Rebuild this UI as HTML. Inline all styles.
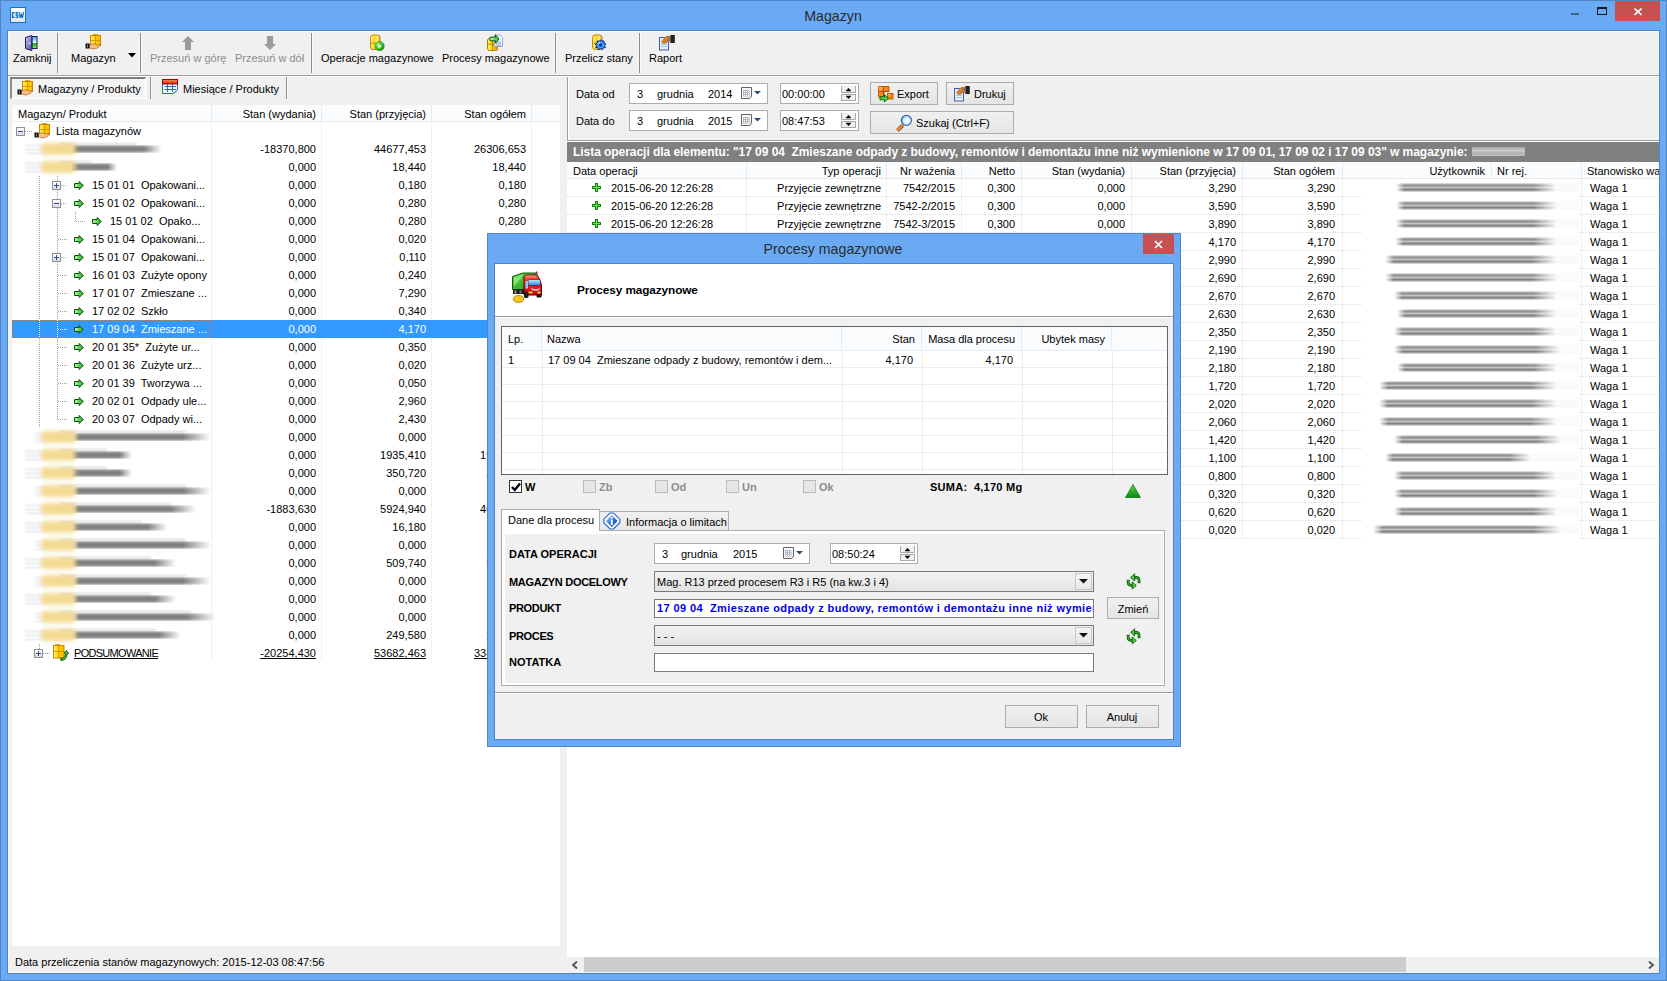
<!DOCTYPE html><html><head><meta charset="utf-8"><style>
html,body{margin:0;padding:0;}
body{width:1667px;height:981px;overflow:hidden;position:relative;background:#6aaaf4;font-family:"Liberation Sans", sans-serif;font-size:11px;color:#000;}
div,svg{position:absolute;box-sizing:border-box;}
.t{white-space:pre;}

</style></head><body>
<div style="left:0px;top:0px;width:1667px;height:981px;border:1px solid #4d86c6;background:#6aaaf4;"></div>
<svg style="left:10px;top:7px;" width="16" height="16" viewBox="0 0 16 16"><defs><linearGradient id="cswg" x1="0" y1="0" x2="0" y2="1"><stop offset="0" stop-color="#ffffff"/><stop offset="1" stop-color="#e4e4e4"/></linearGradient></defs><rect x="0.5" y="0.5" width="15" height="15" fill="url(#cswg)" stroke="#0a78d0"/><path d="M4.6 5.6 H2.6 V10.4 H4.6" stroke="#0a6ec8" stroke-width="1.4" fill="none"/><path d="M8.2 5.6 H6.2 V8 H7.6 V10.4 H5.6" stroke="#0a6ec8" stroke-width="1.3" fill="none"/><path d="M9.3 5 L10.2 11 L11.3 7.5 L12.4 11 L13.6 5" stroke="#0a6ec8" stroke-width="1.2" fill="none"/></svg>
<div class="t" style="left:533px;width:600px;text-align:center;top:8px;font-size:14.2px;line-height:16px;color:#2a2a2a;">Magazyn</div>
<div style="left:1571px;top:13px;width:8px;height:2px;background:#3d5f8a;"></div>
<div style="left:1597px;top:7px;width:10px;height:8px;border:1px solid #1a1a1a;border-top-width:2px;"></div>
<div style="left:1615px;top:1px;width:45px;height:20px;background:#c75050;"></div>
<svg style="left:1634px;top:8px;" width="8" height="8" viewBox="0 0 8 8"><path d="M0.5 0.5 L7.5 7 M7.5 0.5 L0.5 7" stroke="#fff" stroke-width="1.6"/></svg>
<div style="left:7px;top:30px;width:1653px;height:944px;border:1px solid #4d86c6;background:#f0f0f0;"></div>
<div style="left:8px;top:31px;width:1651px;height:1px;background:#f8f8f8;"></div>
<div style="left:8px;top:31px;width:1px;height:942px;background:#faf7f2;"></div>
<div style="left:8px;top:972px;width:1651px;height:1px;background:#faf7f2;"></div>
<div style="left:1658px;top:31px;width:1px;height:942px;background:#faf7f2;"></div>
<div style="left:8px;top:75px;width:1651px;height:1px;background:#a0a0a0;"></div>
<div style="left:8px;top:76px;width:1651px;height:1px;background:#ffffff;"></div>
<div style="left:56px;top:33px;width:1px;height:40px;background:#f6f6f6;"></div>
<div style="left:57px;top:33px;width:1px;height:40px;background:#8c8c8c;"></div>
<div style="left:58px;top:33px;width:1px;height:40px;background:#fafafa;"></div>
<div style="left:139px;top:33px;width:1px;height:40px;background:#f6f6f6;"></div>
<div style="left:140px;top:33px;width:1px;height:40px;background:#8c8c8c;"></div>
<div style="left:141px;top:33px;width:1px;height:40px;background:#fafafa;"></div>
<div style="left:310px;top:33px;width:1px;height:40px;background:#f6f6f6;"></div>
<div style="left:311px;top:33px;width:1px;height:40px;background:#8c8c8c;"></div>
<div style="left:312px;top:33px;width:1px;height:40px;background:#fafafa;"></div>
<div style="left:554px;top:33px;width:1px;height:40px;background:#f6f6f6;"></div>
<div style="left:555px;top:33px;width:1px;height:40px;background:#8c8c8c;"></div>
<div style="left:556px;top:33px;width:1px;height:40px;background:#fafafa;"></div>
<div style="left:638px;top:33px;width:1px;height:40px;background:#f6f6f6;"></div>
<div style="left:639px;top:33px;width:1px;height:40px;background:#8c8c8c;"></div>
<div style="left:640px;top:33px;width:1px;height:40px;background:#fafafa;"></div>
<svg style="left:24px;top:34px;" width="16" height="18" viewBox="0 0 16 18"><defs><linearGradient id="dg" x1="0" y1="0" x2="1" y2="1"><stop offset="0" stop-color="#c8c8ff"/><stop offset="1" stop-color="#50509a"/></linearGradient>
<linearGradient id="skg" x1="0" y1="0" x2="0" y2="1"><stop offset="0" stop-color="#38a8f8"/><stop offset="0.5" stop-color="#e8fcff"/><stop offset="0.52" stop-color="#18a018"/><stop offset="1" stop-color="#70ff50"/></linearGradient></defs>
<rect x="8" y="2.5" width="5" height="12" fill="url(#skg)" stroke="#1c1c5a"/>
<path d="M1.5 3.5 L7.8 1.5 L7.8 16.5 L1.5 14.5 Z" fill="url(#dg)" stroke="#1c1c5a"/>
<rect x="5" y="8.5" width="1.2" height="1.8" fill="#fff"/></svg>
<div class="t" style="left:13px;top:52px;font-size:11px;line-height:13px;">Zamknij</div>
<svg style="left:85px;top:34px;" width="17" height="16" viewBox="0 0 17 16"><defs><linearGradient id="bxg" x1="0" y1="0" x2="1" y2="0"><stop offset="0" stop-color="#fff27a"/><stop offset="0.5" stop-color="#ffd000"/><stop offset="1" stop-color="#ffb800"/></linearGradient></defs>
<rect x="8" y="0" width="5" height="2" fill="#e0a800"/>
<rect x="5.5" y="1.5" width="10" height="10" fill="url(#bxg)" stroke="#c88a00"/>
<path d="M5.5 6.5 H15.5 M10.5 1.5 V11.5" stroke="#c88a00" stroke-width="0.8"/>
<path d="M4.5 10.5 Q9 9 12 11 L15.5 10.5 L14 13 Q11 15 8 15 L4.5 14 Z" fill="#f8c080" stroke="#a05020" stroke-width="0.6"/>
<rect x="0.5" y="9.5" width="4" height="5" fill="#111"/>
<rect x="2" y="10.5" width="1" height="3" fill="#888"/></svg>
<div class="t" style="left:71px;top:52px;font-size:11px;line-height:13px;">Magazyn</div>
<svg style="left:128px;top:53px;" width="8" height="5" viewBox="0 0 8 5"><path d="M0 0 L8 0 L4 4.5 Z" fill="#000"/></svg>
<svg style="left:182px;top:36px;" width="12" height="14" viewBox="0 0 12 14"><path d="M6 0 L12 6 L9 6 L9 14 L3 14 L3 6 L0 6 Z" fill="#9b9b9b"/></svg>
<div class="t" style="left:150px;top:52px;font-size:11px;line-height:13px;color:#8d8d8d;">Przesuń w górę</div>
<svg style="left:264px;top:36px;" width="12" height="14" viewBox="0 0 12 14"><path d="M6 14 L12 8 L9 8 L9 0 L3 0 L3 8 L0 8 Z" fill="#9b9b9b"/></svg>
<div class="t" style="left:235px;top:52px;font-size:11px;line-height:13px;color:#8d8d8d;">Przesuń w dół</div>
<svg style="left:369px;top:34px;" width="16" height="17" viewBox="0 0 16 17"><defs><linearGradient id="cyg" x1="0" y1="0" x2="1" y2="0"><stop offset="0" stop-color="#fff68a"/><stop offset="0.4" stop-color="#ffd21a"/><stop offset="0.75" stop-color="#ffe890"/><stop offset="1" stop-color="#d89a00"/></linearGradient>
<radialGradient id="grg" cx="0.3" cy="0.3" r="0.8"><stop offset="0" stop-color="#90f070"/><stop offset="1" stop-color="#089008"/></radialGradient></defs>
<rect x="1.5" y="1" width="9.5" height="14.5" rx="2.5" fill="url(#cyg)" stroke="#c08a00"/>
<path d="M1.5 9.2 H8" stroke="#c08a00" stroke-width="0.9"/>
<circle cx="10.6" cy="12.2" r="4.6" fill="url(#grg)" stroke="#08a008" stroke-width="0.6"/>
<path d="M9.3 9.8 L12.8 12.2 L9.3 14.6 Z" fill="#fff"/></svg>
<div class="t" style="left:321px;top:52px;font-size:11px;line-height:13px;">Operacje magazynowe</div>
<svg style="left:486px;top:34px;" width="17" height="17" viewBox="0 0 17 17"><defs><linearGradient id="pyg" x1="0" y1="0" x2="1" y2="0"><stop offset="0" stop-color="#ffff50"/><stop offset="0.6" stop-color="#ffc800"/><stop offset="1" stop-color="#e0a000"/></linearGradient>
<linearGradient id="pag" x1="0" y1="0" x2="1" y2="0"><stop offset="0" stop-color="#c0ffc0"/><stop offset="1" stop-color="#20b020"/></linearGradient></defs>
<rect x="1.5" y="4.5" width="10" height="12" rx="2" fill="url(#pyg)" stroke="#b07a00"/>
<path d="M6.5 4.5 V16.5 M1.5 10.2 H11.5" stroke="#b07a00" stroke-width="0.9"/>
<path d="M8.5 1 H14 L16.5 3.5 V12.5 H8.5 Z" fill="#eef8ff" stroke="#9aa4d0"/>
<path d="M10 8 H15 M10 10 H15 M10 12 H15" stroke="#7080c0" stroke-width="0.8"/>
<path d="M4 3.2 H9.5 V0.8 L13 5 L9.5 9.2 V6.8 H4 Z" fill="url(#pag)" stroke="#0a600a"/></svg>
<div class="t" style="left:442px;top:52px;font-size:11px;line-height:13px;">Procesy magazynowe</div>
<svg style="left:591px;top:34px;" width="17" height="17" viewBox="0 0 17 17"><rect x="1.5" y="1" width="9.5" height="14.5" rx="2.5" fill="url(#cyg)" stroke="#c08a00"/>
<path d="M1.5 9.2 H6" stroke="#c08a00" stroke-width="0.9"/>
<path d="M9.6 5.8 L10.8 7.3 L12.9 6.9 L12.9 8.9 L15 10.1 L13.6 11.6 L14.4 13.6 L12.3 13.8 L11.4 15.7 L9.6 14.6 L7.8 15.7 L6.9 13.8 L4.8 13.6 L5.6 11.6 L4.2 10.1 L6.3 8.9 L6.3 6.9 L8.4 7.3 Z" fill="#3aa0f8" stroke="#001a90" stroke-width="1"/>
<circle cx="9.6" cy="11" r="1.6" fill="#0a2a80"/>
<path d="M6.5 10 Q7.5 8 9 8.5" stroke="#e0f8ff" stroke-width="1" fill="none"/></svg>
<div class="t" style="left:565px;top:52px;font-size:11px;line-height:13px;">Przelicz stany</div>
<svg style="left:658px;top:34px;" width="18" height="17" viewBox="0 0 18 17"><rect x="1.5" y="3.5" width="9" height="12.5" fill="#e0f2ff" stroke="#4a5aa8"/>
<path d="M3 10.5 H9 M3 12.5 H9" stroke="#9cc8f0"/>
<path d="M3 7.5 L7 3 L10 1.5 L12.5 3 L12 6 L8 9.5 L5 10 Z" fill="#c8782a"/>
<path d="M4 7.5 L8 4 M5 8.5 L9 5" stroke="#f8d080" stroke-width="0.6" stroke-dasharray="1 1"/>
<rect x="12.3" y="1" width="4.5" height="8" fill="#222"/>
<rect x="11" y="2.5" width="1.5" height="5" fill="#777"/></svg>
<div class="t" style="left:649px;top:52px;font-size:11px;line-height:13px;">Raport</div>
<div style="left:10px;top:77px;width:136px;height:22px;background:#f4f4f4;border-top:2px solid #7d7d7d;border-left:2px solid #8d8d8d;border-right:1px solid #fff;border-bottom:1px solid #fff;"></div>
<svg style="left:17px;top:80px;" width="17" height="16" viewBox="0 0 17 16"><defs><linearGradient id="bxg" x1="0" y1="0" x2="1" y2="0"><stop offset="0" stop-color="#fff27a"/><stop offset="0.5" stop-color="#ffd000"/><stop offset="1" stop-color="#ffb800"/></linearGradient></defs>
<rect x="8" y="0" width="5" height="2" fill="#e0a800"/>
<rect x="5.5" y="1.5" width="10" height="10" fill="url(#bxg)" stroke="#c88a00"/>
<path d="M5.5 6.5 H15.5 M10.5 1.5 V11.5" stroke="#c88a00" stroke-width="0.8"/>
<path d="M4.5 10.5 Q9 9 12 11 L15.5 10.5 L14 13 Q11 15 8 15 L4.5 14 Z" fill="#f8c080" stroke="#a05020" stroke-width="0.6"/>
<rect x="0.5" y="9.5" width="4" height="5" fill="#111"/>
<rect x="2" y="10.5" width="1" height="3" fill="#888"/></svg>
<div class="t" style="left:38px;top:83px;font-size:11px;line-height:13px;">Magazyny / Produkty</div>
<div style="left:150px;top:77px;width:1px;height:22px;background:#8c8c8c;"></div>
<div style="left:151px;top:77px;width:1px;height:22px;background:#fafafa;"></div>
<svg style="left:162px;top:79px;" width="16" height="16" viewBox="0 0 16 16"><defs><linearGradient id="rdg" x1="0" y1="0" x2="0" y2="1"><stop offset="0" stop-color="#ff9060"/><stop offset="1" stop-color="#e02000"/></linearGradient></defs>
<path d="M0.5 4.5 H15.5 V11 L11 14.5 H0.5 Z" fill="#f4fbff" stroke="#2a6ad0"/>
<rect x="0.5" y="0.5" width="15" height="4.5" fill="url(#rdg)" stroke="#a00000"/>
<path d="M2.5 7.5 H14 M2.5 10.5 H14 M5.5 5 V13 M10.5 5 V13" stroke="#2a6ad0"/>
<path d="M10.5 14.5 L15.5 10.5 L13 14 Z" fill="#3a8ae8"/></svg>
<div class="t" style="left:183px;top:83px;font-size:11px;line-height:13px;">Miesiące / Produkty</div>
<div style="left:286px;top:77px;width:1px;height:22px;background:#8c8c8c;"></div>
<div style="left:287px;top:77px;width:1px;height:22px;background:#fafafa;"></div>
<div style="left:12px;top:105px;width:548px;height:841px;background:#fff;"></div>
<div style="left:12px;top:105px;width:548px;height:16px;background:#fbfcfd;"></div>
<div style="left:12px;top:121px;width:548px;height:1px;background:#e3ebf6;"></div>
<div style="left:211px;top:105px;width:1px;height:16px;background:#e3ebf6;"></div>
<div style="left:321px;top:105px;width:1px;height:16px;background:#e3ebf6;"></div>
<div style="left:431px;top:105px;width:1px;height:16px;background:#e3ebf6;"></div>
<div style="left:531px;top:105px;width:1px;height:16px;background:#e3ebf6;"></div>
<div class="t" style="left:18px;top:108px;font-size:11px;line-height:13px;">Magazyn/ Produkt</div>
<div class="t" style="left:-84px;width:400px;text-align:right;top:108px;font-size:11px;line-height:13px;">Stan (wydania)</div>
<div class="t" style="left:26px;width:400px;text-align:right;top:108px;font-size:11px;line-height:13px;">Stan (przyjęcia)</div>
<div class="t" style="left:126px;width:400px;text-align:right;top:108px;font-size:11px;line-height:13px;">Stan ogółem</div>
<div style="left:211px;top:122px;width:1px;height:540px;background:repeating-linear-gradient(to bottom,#e2e2e2 0 1px,transparent 1px 2px);"></div>
<div style="left:321px;top:122px;width:1px;height:540px;background:repeating-linear-gradient(to bottom,#e2e2e2 0 1px,transparent 1px 2px);"></div>
<div style="left:431px;top:122px;width:1px;height:540px;background:repeating-linear-gradient(to bottom,#e2e2e2 0 1px,transparent 1px 2px);"></div>
<div style="left:531px;top:122px;width:1px;height:540px;background:repeating-linear-gradient(to bottom,#e2e2e2 0 1px,transparent 1px 2px);"></div>
<div style="left:12px;top:320px;width:548px;height:18px;background:#3399ff;"></div>
<div style="left:12px;top:320px;width:199px;height:18px;border:1px dotted #e07010;"></div>
<div style="left:39px;top:176px;width:1px;height:252px;background:repeating-linear-gradient(to bottom,#a0a0a0 0 1px,transparent 1px 2px);"></div>
<div style="left:57px;top:176px;width:1px;height:244px;background:repeating-linear-gradient(to bottom,#a0a0a0 0 1px,transparent 1px 2px);"></div>
<div style="left:75px;top:212px;width:1px;height:10px;background:repeating-linear-gradient(to bottom,#a0a0a0 0 1px,transparent 1px 2px);"></div>
<div style="left:61px;top:185px;width:6px;height:1px;background:repeating-linear-gradient(to right,#a0a0a0 0 1px,transparent 1px 2px);"></div>
<svg style="left:52px;top:181px" width="9" height="9" viewBox="0 0 9 9"><defs><linearGradient id="gb" x1="0" y1="0" x2="0" y2="1"><stop offset="0" stop-color="#fff"/><stop offset="1" stop-color="#d8d8d8"/></linearGradient></defs><rect x="0.5" y="0.5" width="8" height="8" fill="url(#gb)" stroke="#919191"/><path d="M2 4.5 H7" stroke="#2a4a9a"/><path d="M4.5 2 V7" stroke="#2a4a9a"/></svg>
<svg style="left:74px;top:181px;" width="10" height="9" viewBox="0 0 10 9"><defs><linearGradient id="gag" x1="0" y1="0" x2="1" y2="0"><stop offset="0" stop-color="#b8ffb0"/><stop offset="1" stop-color="#18a818"/></linearGradient></defs><path d="M0.5 2.5 H5.2 V0.5 L9.2 4.5 L5.2 8.5 V6.5 H0.5 Z" fill="url(#gag)" stroke="#064a06" stroke-width="1"/></svg>
<div class="t" style="left:92px;top:179px;font-size:11px;line-height:13px;">15 01 01  Opakowani...</div>
<div class="t" style="left:-84px;width:400px;text-align:right;top:179px;font-size:11px;line-height:13px;">0,000</div>
<div class="t" style="left:26px;width:400px;text-align:right;top:179px;font-size:11px;line-height:13px;">0,180</div>
<div class="t" style="left:126px;width:400px;text-align:right;top:179px;font-size:11px;line-height:13px;">0,180</div>
<div style="left:61px;top:203px;width:6px;height:1px;background:repeating-linear-gradient(to right,#a0a0a0 0 1px,transparent 1px 2px);"></div>
<svg style="left:52px;top:199px" width="9" height="9" viewBox="0 0 9 9"><defs><linearGradient id="gb" x1="0" y1="0" x2="0" y2="1"><stop offset="0" stop-color="#fff"/><stop offset="1" stop-color="#d8d8d8"/></linearGradient></defs><rect x="0.5" y="0.5" width="8" height="8" fill="url(#gb)" stroke="#919191"/><path d="M2 4.5 H7" stroke="#2a4a9a"/></svg>
<svg style="left:74px;top:199px;" width="10" height="9" viewBox="0 0 10 9"><defs><linearGradient id="gag" x1="0" y1="0" x2="1" y2="0"><stop offset="0" stop-color="#b8ffb0"/><stop offset="1" stop-color="#18a818"/></linearGradient></defs><path d="M0.5 2.5 H5.2 V0.5 L9.2 4.5 L5.2 8.5 V6.5 H0.5 Z" fill="url(#gag)" stroke="#064a06" stroke-width="1"/></svg>
<div class="t" style="left:92px;top:197px;font-size:11px;line-height:13px;">15 01 02  Opakowani...</div>
<div class="t" style="left:-84px;width:400px;text-align:right;top:197px;font-size:11px;line-height:13px;">0,000</div>
<div class="t" style="left:26px;width:400px;text-align:right;top:197px;font-size:11px;line-height:13px;">0,280</div>
<div class="t" style="left:126px;width:400px;text-align:right;top:197px;font-size:11px;line-height:13px;">0,280</div>
<div style="left:58px;top:239px;width:9px;height:1px;background:repeating-linear-gradient(to right,#a0a0a0 0 1px,transparent 1px 2px);"></div>
<svg style="left:74px;top:235px;" width="10" height="9" viewBox="0 0 10 9"><defs><linearGradient id="gag" x1="0" y1="0" x2="1" y2="0"><stop offset="0" stop-color="#b8ffb0"/><stop offset="1" stop-color="#18a818"/></linearGradient></defs><path d="M0.5 2.5 H5.2 V0.5 L9.2 4.5 L5.2 8.5 V6.5 H0.5 Z" fill="url(#gag)" stroke="#064a06" stroke-width="1"/></svg>
<div class="t" style="left:92px;top:233px;font-size:11px;line-height:13px;">15 01 04  Opakowani...</div>
<div class="t" style="left:-84px;width:400px;text-align:right;top:233px;font-size:11px;line-height:13px;">0,000</div>
<div class="t" style="left:26px;width:400px;text-align:right;top:233px;font-size:11px;line-height:13px;">0,020</div>
<div class="t" style="left:126px;width:400px;text-align:right;top:233px;font-size:11px;line-height:13px;">0,020</div>
<div style="left:61px;top:257px;width:6px;height:1px;background:repeating-linear-gradient(to right,#a0a0a0 0 1px,transparent 1px 2px);"></div>
<svg style="left:52px;top:253px" width="9" height="9" viewBox="0 0 9 9"><defs><linearGradient id="gb" x1="0" y1="0" x2="0" y2="1"><stop offset="0" stop-color="#fff"/><stop offset="1" stop-color="#d8d8d8"/></linearGradient></defs><rect x="0.5" y="0.5" width="8" height="8" fill="url(#gb)" stroke="#919191"/><path d="M2 4.5 H7" stroke="#2a4a9a"/><path d="M4.5 2 V7" stroke="#2a4a9a"/></svg>
<svg style="left:74px;top:253px;" width="10" height="9" viewBox="0 0 10 9"><defs><linearGradient id="gag" x1="0" y1="0" x2="1" y2="0"><stop offset="0" stop-color="#b8ffb0"/><stop offset="1" stop-color="#18a818"/></linearGradient></defs><path d="M0.5 2.5 H5.2 V0.5 L9.2 4.5 L5.2 8.5 V6.5 H0.5 Z" fill="url(#gag)" stroke="#064a06" stroke-width="1"/></svg>
<div class="t" style="left:92px;top:251px;font-size:11px;line-height:13px;">15 01 07  Opakowani...</div>
<div class="t" style="left:-84px;width:400px;text-align:right;top:251px;font-size:11px;line-height:13px;">0,000</div>
<div class="t" style="left:26px;width:400px;text-align:right;top:251px;font-size:11px;line-height:13px;">0,110</div>
<div class="t" style="left:126px;width:400px;text-align:right;top:251px;font-size:11px;line-height:13px;">0,110</div>
<div style="left:58px;top:275px;width:9px;height:1px;background:repeating-linear-gradient(to right,#a0a0a0 0 1px,transparent 1px 2px);"></div>
<svg style="left:74px;top:271px;" width="10" height="9" viewBox="0 0 10 9"><defs><linearGradient id="gag" x1="0" y1="0" x2="1" y2="0"><stop offset="0" stop-color="#b8ffb0"/><stop offset="1" stop-color="#18a818"/></linearGradient></defs><path d="M0.5 2.5 H5.2 V0.5 L9.2 4.5 L5.2 8.5 V6.5 H0.5 Z" fill="url(#gag)" stroke="#064a06" stroke-width="1"/></svg>
<div class="t" style="left:92px;top:269px;font-size:11px;line-height:13px;">16 01 03  Zużyte opony</div>
<div class="t" style="left:-84px;width:400px;text-align:right;top:269px;font-size:11px;line-height:13px;">0,000</div>
<div class="t" style="left:26px;width:400px;text-align:right;top:269px;font-size:11px;line-height:13px;">0,240</div>
<div class="t" style="left:126px;width:400px;text-align:right;top:269px;font-size:11px;line-height:13px;">0,240</div>
<div style="left:58px;top:293px;width:9px;height:1px;background:repeating-linear-gradient(to right,#a0a0a0 0 1px,transparent 1px 2px);"></div>
<svg style="left:74px;top:289px;" width="10" height="9" viewBox="0 0 10 9"><defs><linearGradient id="gag" x1="0" y1="0" x2="1" y2="0"><stop offset="0" stop-color="#b8ffb0"/><stop offset="1" stop-color="#18a818"/></linearGradient></defs><path d="M0.5 2.5 H5.2 V0.5 L9.2 4.5 L5.2 8.5 V6.5 H0.5 Z" fill="url(#gag)" stroke="#064a06" stroke-width="1"/></svg>
<div class="t" style="left:92px;top:287px;font-size:11px;line-height:13px;">17 01 07  Zmieszane ...</div>
<div class="t" style="left:-84px;width:400px;text-align:right;top:287px;font-size:11px;line-height:13px;">0,000</div>
<div class="t" style="left:26px;width:400px;text-align:right;top:287px;font-size:11px;line-height:13px;">7,290</div>
<div class="t" style="left:126px;width:400px;text-align:right;top:287px;font-size:11px;line-height:13px;">7,290</div>
<div style="left:58px;top:311px;width:9px;height:1px;background:repeating-linear-gradient(to right,#a0a0a0 0 1px,transparent 1px 2px);"></div>
<svg style="left:74px;top:307px;" width="10" height="9" viewBox="0 0 10 9"><defs><linearGradient id="gag" x1="0" y1="0" x2="1" y2="0"><stop offset="0" stop-color="#b8ffb0"/><stop offset="1" stop-color="#18a818"/></linearGradient></defs><path d="M0.5 2.5 H5.2 V0.5 L9.2 4.5 L5.2 8.5 V6.5 H0.5 Z" fill="url(#gag)" stroke="#064a06" stroke-width="1"/></svg>
<div class="t" style="left:92px;top:305px;font-size:11px;line-height:13px;">17 02 02  Szkło</div>
<div class="t" style="left:-84px;width:400px;text-align:right;top:305px;font-size:11px;line-height:13px;">0,000</div>
<div class="t" style="left:26px;width:400px;text-align:right;top:305px;font-size:11px;line-height:13px;">0,340</div>
<div class="t" style="left:126px;width:400px;text-align:right;top:305px;font-size:11px;line-height:13px;">0,340</div>
<div style="left:39px;top:320px;width:1px;height:18px;background:repeating-linear-gradient(to bottom,#ffffff 0 1px,transparent 1px 2px);"></div>
<div style="left:57px;top:320px;width:1px;height:18px;background:repeating-linear-gradient(to bottom,#ffffff 0 1px,transparent 1px 2px);"></div>
<div style="left:58px;top:329px;width:9px;height:1px;background:repeating-linear-gradient(to right,#ffffff 0 1px,transparent 1px 2px);"></div>
<svg style="left:74px;top:325px;" width="10" height="9" viewBox="0 0 10 9"><defs><linearGradient id="gag" x1="0" y1="0" x2="1" y2="0"><stop offset="0" stop-color="#b8ffb0"/><stop offset="1" stop-color="#18a818"/></linearGradient></defs><path d="M0.5 2.5 H5.2 V0.5 L9.2 4.5 L5.2 8.5 V6.5 H0.5 Z" fill="url(#gag)" stroke="#064a06" stroke-width="1"/></svg>
<div class="t" style="left:92px;top:323px;font-size:11px;line-height:13px;color:#fff;">17 09 04  Zmieszane ...</div>
<div class="t" style="left:-84px;width:400px;text-align:right;top:323px;font-size:11px;line-height:13px;color:#fff;">0,000</div>
<div class="t" style="left:26px;width:400px;text-align:right;top:323px;font-size:11px;line-height:13px;color:#fff;">4,170</div>
<div class="t" style="left:126px;width:400px;text-align:right;top:323px;font-size:11px;line-height:13px;color:#fff;">4,170</div>
<div style="left:58px;top:347px;width:9px;height:1px;background:repeating-linear-gradient(to right,#a0a0a0 0 1px,transparent 1px 2px);"></div>
<svg style="left:74px;top:343px;" width="10" height="9" viewBox="0 0 10 9"><defs><linearGradient id="gag" x1="0" y1="0" x2="1" y2="0"><stop offset="0" stop-color="#b8ffb0"/><stop offset="1" stop-color="#18a818"/></linearGradient></defs><path d="M0.5 2.5 H5.2 V0.5 L9.2 4.5 L5.2 8.5 V6.5 H0.5 Z" fill="url(#gag)" stroke="#064a06" stroke-width="1"/></svg>
<div class="t" style="left:92px;top:341px;font-size:11px;line-height:13px;">20 01 35*  Zużyte ur...</div>
<div class="t" style="left:-84px;width:400px;text-align:right;top:341px;font-size:11px;line-height:13px;">0,000</div>
<div class="t" style="left:26px;width:400px;text-align:right;top:341px;font-size:11px;line-height:13px;">0,350</div>
<div class="t" style="left:126px;width:400px;text-align:right;top:341px;font-size:11px;line-height:13px;">0,350</div>
<div style="left:58px;top:365px;width:9px;height:1px;background:repeating-linear-gradient(to right,#a0a0a0 0 1px,transparent 1px 2px);"></div>
<svg style="left:74px;top:361px;" width="10" height="9" viewBox="0 0 10 9"><defs><linearGradient id="gag" x1="0" y1="0" x2="1" y2="0"><stop offset="0" stop-color="#b8ffb0"/><stop offset="1" stop-color="#18a818"/></linearGradient></defs><path d="M0.5 2.5 H5.2 V0.5 L9.2 4.5 L5.2 8.5 V6.5 H0.5 Z" fill="url(#gag)" stroke="#064a06" stroke-width="1"/></svg>
<div class="t" style="left:92px;top:359px;font-size:11px;line-height:13px;">20 01 36  Zużyte urz...</div>
<div class="t" style="left:-84px;width:400px;text-align:right;top:359px;font-size:11px;line-height:13px;">0,000</div>
<div class="t" style="left:26px;width:400px;text-align:right;top:359px;font-size:11px;line-height:13px;">0,020</div>
<div class="t" style="left:126px;width:400px;text-align:right;top:359px;font-size:11px;line-height:13px;">0,020</div>
<div style="left:58px;top:383px;width:9px;height:1px;background:repeating-linear-gradient(to right,#a0a0a0 0 1px,transparent 1px 2px);"></div>
<svg style="left:74px;top:379px;" width="10" height="9" viewBox="0 0 10 9"><defs><linearGradient id="gag" x1="0" y1="0" x2="1" y2="0"><stop offset="0" stop-color="#b8ffb0"/><stop offset="1" stop-color="#18a818"/></linearGradient></defs><path d="M0.5 2.5 H5.2 V0.5 L9.2 4.5 L5.2 8.5 V6.5 H0.5 Z" fill="url(#gag)" stroke="#064a06" stroke-width="1"/></svg>
<div class="t" style="left:92px;top:377px;font-size:11px;line-height:13px;">20 01 39  Tworzywa ...</div>
<div class="t" style="left:-84px;width:400px;text-align:right;top:377px;font-size:11px;line-height:13px;">0,000</div>
<div class="t" style="left:26px;width:400px;text-align:right;top:377px;font-size:11px;line-height:13px;">0,050</div>
<div class="t" style="left:126px;width:400px;text-align:right;top:377px;font-size:11px;line-height:13px;">0,050</div>
<div style="left:58px;top:401px;width:9px;height:1px;background:repeating-linear-gradient(to right,#a0a0a0 0 1px,transparent 1px 2px);"></div>
<svg style="left:74px;top:397px;" width="10" height="9" viewBox="0 0 10 9"><defs><linearGradient id="gag" x1="0" y1="0" x2="1" y2="0"><stop offset="0" stop-color="#b8ffb0"/><stop offset="1" stop-color="#18a818"/></linearGradient></defs><path d="M0.5 2.5 H5.2 V0.5 L9.2 4.5 L5.2 8.5 V6.5 H0.5 Z" fill="url(#gag)" stroke="#064a06" stroke-width="1"/></svg>
<div class="t" style="left:92px;top:395px;font-size:11px;line-height:13px;">20 02 01  Odpady ule...</div>
<div class="t" style="left:-84px;width:400px;text-align:right;top:395px;font-size:11px;line-height:13px;">0,000</div>
<div class="t" style="left:26px;width:400px;text-align:right;top:395px;font-size:11px;line-height:13px;">2,960</div>
<div class="t" style="left:126px;width:400px;text-align:right;top:395px;font-size:11px;line-height:13px;">2,960</div>
<div style="left:58px;top:419px;width:9px;height:1px;background:repeating-linear-gradient(to right,#a0a0a0 0 1px,transparent 1px 2px);"></div>
<svg style="left:74px;top:415px;" width="10" height="9" viewBox="0 0 10 9"><defs><linearGradient id="gag" x1="0" y1="0" x2="1" y2="0"><stop offset="0" stop-color="#b8ffb0"/><stop offset="1" stop-color="#18a818"/></linearGradient></defs><path d="M0.5 2.5 H5.2 V0.5 L9.2 4.5 L5.2 8.5 V6.5 H0.5 Z" fill="url(#gag)" stroke="#064a06" stroke-width="1"/></svg>
<div class="t" style="left:92px;top:413px;font-size:11px;line-height:13px;">20 03 07  Odpady wi...</div>
<div class="t" style="left:-84px;width:400px;text-align:right;top:413px;font-size:11px;line-height:13px;">0,000</div>
<div class="t" style="left:26px;width:400px;text-align:right;top:413px;font-size:11px;line-height:13px;">2,430</div>
<div class="t" style="left:126px;width:400px;text-align:right;top:413px;font-size:11px;line-height:13px;">2,430</div>
<div style="left:76px;top:221px;width:9px;height:1px;background:repeating-linear-gradient(to right,#a0a0a0 0 1px,transparent 1px 2px);"></div>
<svg style="left:92px;top:217px;" width="10" height="9" viewBox="0 0 10 9"><defs><linearGradient id="gag" x1="0" y1="0" x2="1" y2="0"><stop offset="0" stop-color="#b8ffb0"/><stop offset="1" stop-color="#18a818"/></linearGradient></defs><path d="M0.5 2.5 H5.2 V0.5 L9.2 4.5 L5.2 8.5 V6.5 H0.5 Z" fill="url(#gag)" stroke="#064a06" stroke-width="1"/></svg>
<div class="t" style="left:110px;top:215px;font-size:11px;line-height:13px;">15 01 02  Opako...</div>
<div class="t" style="left:-84px;width:400px;text-align:right;top:215px;font-size:11px;line-height:13px;">0,000</div>
<div class="t" style="left:26px;width:400px;text-align:right;top:215px;font-size:11px;line-height:13px;">0,280</div>
<div class="t" style="left:126px;width:400px;text-align:right;top:215px;font-size:11px;line-height:13px;">0,280</div>
<svg style="left:16px;top:127px" width="9" height="9" viewBox="0 0 9 9"><defs><linearGradient id="gb" x1="0" y1="0" x2="0" y2="1"><stop offset="0" stop-color="#fff"/><stop offset="1" stop-color="#d8d8d8"/></linearGradient></defs><rect x="0.5" y="0.5" width="8" height="8" fill="url(#gb)" stroke="#919191"/><path d="M2 4.5 H7" stroke="#2a4a9a"/></svg>
<div style="left:25px;top:131px;width:7px;height:1px;background:repeating-linear-gradient(to right,#a0a0a0 0 1px,transparent 1px 2px);"></div>
<svg style="left:34px;top:123px;" width="17" height="16" viewBox="0 0 17 16"><defs><linearGradient id="bxg" x1="0" y1="0" x2="1" y2="0"><stop offset="0" stop-color="#fff27a"/><stop offset="0.5" stop-color="#ffd000"/><stop offset="1" stop-color="#ffb800"/></linearGradient></defs>
<rect x="8" y="0" width="5" height="2" fill="#e0a800"/>
<rect x="5.5" y="1.5" width="10" height="10" fill="url(#bxg)" stroke="#c88a00"/>
<path d="M5.5 6.5 H15.5 M10.5 1.5 V11.5" stroke="#c88a00" stroke-width="0.8"/>
<path d="M4.5 10.5 Q9 9 12 11 L15.5 10.5 L14 13 Q11 15 8 15 L4.5 14 Z" fill="#f8c080" stroke="#a05020" stroke-width="0.6"/>
<rect x="0.5" y="9.5" width="4" height="5" fill="#111"/>
<rect x="2" y="10.5" width="1" height="3" fill="#888"/></svg>
<div class="t" style="left:56px;top:125px;font-size:11px;line-height:13px;">Lista magazynów</div>
<div style="left:25px;top:144px;width:20px;height:10px;background:repeating-linear-gradient(to bottom,transparent 0 1px,#c4cad6 1px 2px,transparent 2px 4px);filter:blur(0.8px);opacity:0.75"></div>
<div style="left:60px;top:143px;width:77px;height:2px;background:#c8c8c8;filter:blur(0.8px);opacity:0.7"></div>
<div style="left:70px;top:145px;width:92px;height:8px;background:linear-gradient(to bottom,#d8d8d8 0,#4a4a4a 30%,#8a8a8a 50%,#4a4a4a 70%,#d8d8d8 100%);filter:blur(0.8px);opacity:0.85;-webkit-mask-image:linear-gradient(to right,transparent 0,#000 6%,#000 80%,transparent 100%);"></div>
<div style="left:41px;top:143px;width:35px;height:12px;background:#f2d78a;filter:blur(2.2px);border-radius:5px;opacity:0.92"></div>
<div class="t" style="left:-84px;width:400px;text-align:right;top:143px;font-size:11px;line-height:13px;">-18370,800</div>
<div class="t" style="left:26px;width:400px;text-align:right;top:143px;font-size:11px;line-height:13px;">44677,453</div>
<div class="t" style="left:126px;width:400px;text-align:right;top:143px;font-size:11px;line-height:13px;">26306,653</div>
<div style="left:25px;top:162px;width:20px;height:10px;background:repeating-linear-gradient(to bottom,transparent 0 1px,#c4cad6 1px 2px,transparent 2px 4px);filter:blur(0.8px);opacity:0.75"></div>
<div style="left:60px;top:161px;width:32px;height:2px;background:#c8c8c8;filter:blur(0.8px);opacity:0.7"></div>
<div style="left:70px;top:163px;width:47px;height:8px;background:linear-gradient(to bottom,#d8d8d8 0,#4a4a4a 30%,#8a8a8a 50%,#4a4a4a 70%,#d8d8d8 100%);filter:blur(0.8px);opacity:0.85;-webkit-mask-image:linear-gradient(to right,transparent 0,#000 6%,#000 80%,transparent 100%);"></div>
<div style="left:41px;top:161px;width:35px;height:12px;background:#f2d78a;filter:blur(2.2px);border-radius:5px;opacity:0.92"></div>
<div class="t" style="left:-84px;width:400px;text-align:right;top:161px;font-size:11px;line-height:13px;">0,000</div>
<div class="t" style="left:26px;width:400px;text-align:right;top:161px;font-size:11px;line-height:13px;">18,440</div>
<div class="t" style="left:126px;width:400px;text-align:right;top:161px;font-size:11px;line-height:13px;">18,440</div>
<div style="left:35px;top:432px;width:10px;height:10px;background:repeating-linear-gradient(to bottom,transparent 0 1px,#c4cad6 1px 2px,transparent 2px 4px);filter:blur(0.8px);opacity:0.75"></div>
<div style="left:60px;top:431px;width:126px;height:2px;background:#c8c8c8;filter:blur(0.8px);opacity:0.7"></div>
<div style="left:70px;top:433px;width:141px;height:8px;background:linear-gradient(to bottom,#d8d8d8 0,#4a4a4a 30%,#8a8a8a 50%,#4a4a4a 70%,#d8d8d8 100%);filter:blur(0.8px);opacity:0.85;-webkit-mask-image:linear-gradient(to right,transparent 0,#000 6%,#000 80%,transparent 100%);"></div>
<div style="left:41px;top:431px;width:35px;height:12px;background:#f2d78a;filter:blur(2.2px);border-radius:5px;opacity:0.92"></div>
<div class="t" style="left:-84px;width:400px;text-align:right;top:431px;font-size:11px;line-height:13px;">0,000</div>
<div class="t" style="left:26px;width:400px;text-align:right;top:431px;font-size:11px;line-height:13px;">0,000</div>
<div class="t" style="left:126px;width:400px;text-align:right;top:431px;font-size:11px;line-height:13px;">0,000</div>
<div style="left:25px;top:450px;width:20px;height:10px;background:repeating-linear-gradient(to bottom,transparent 0 1px,#c4cad6 1px 2px,transparent 2px 4px);filter:blur(0.8px);opacity:0.75"></div>
<div style="left:60px;top:449px;width:47px;height:2px;background:#c8c8c8;filter:blur(0.8px);opacity:0.7"></div>
<div style="left:70px;top:451px;width:62px;height:8px;background:linear-gradient(to bottom,#d8d8d8 0,#4a4a4a 30%,#8a8a8a 50%,#4a4a4a 70%,#d8d8d8 100%);filter:blur(0.8px);opacity:0.85;-webkit-mask-image:linear-gradient(to right,transparent 0,#000 6%,#000 80%,transparent 100%);"></div>
<div style="left:41px;top:449px;width:35px;height:12px;background:#f2d78a;filter:blur(2.2px);border-radius:5px;opacity:0.92"></div>
<div class="t" style="left:-84px;width:400px;text-align:right;top:449px;font-size:11px;line-height:13px;">0,000</div>
<div class="t" style="left:26px;width:400px;text-align:right;top:449px;font-size:11px;line-height:13px;">1935,410</div>
<div class="t" style="left:126px;width:400px;text-align:right;top:449px;font-size:11px;line-height:13px;">1935,410</div>
<div style="left:25px;top:468px;width:20px;height:10px;background:repeating-linear-gradient(to bottom,transparent 0 1px,#c4cad6 1px 2px,transparent 2px 4px);filter:blur(0.8px);opacity:0.75"></div>
<div style="left:60px;top:467px;width:47px;height:2px;background:#c8c8c8;filter:blur(0.8px);opacity:0.7"></div>
<div style="left:70px;top:469px;width:62px;height:8px;background:linear-gradient(to bottom,#d8d8d8 0,#4a4a4a 30%,#8a8a8a 50%,#4a4a4a 70%,#d8d8d8 100%);filter:blur(0.8px);opacity:0.85;-webkit-mask-image:linear-gradient(to right,transparent 0,#000 6%,#000 80%,transparent 100%);"></div>
<div style="left:41px;top:467px;width:35px;height:12px;background:#f2d78a;filter:blur(2.2px);border-radius:5px;opacity:0.92"></div>
<div class="t" style="left:-84px;width:400px;text-align:right;top:467px;font-size:11px;line-height:13px;">0,000</div>
<div class="t" style="left:26px;width:400px;text-align:right;top:467px;font-size:11px;line-height:13px;">350,720</div>
<div class="t" style="left:126px;width:400px;text-align:right;top:467px;font-size:11px;line-height:13px;">350,720</div>
<div style="left:35px;top:486px;width:10px;height:10px;background:repeating-linear-gradient(to bottom,transparent 0 1px,#c4cad6 1px 2px,transparent 2px 4px);filter:blur(0.8px);opacity:0.75"></div>
<div style="left:60px;top:485px;width:126px;height:2px;background:#c8c8c8;filter:blur(0.8px);opacity:0.7"></div>
<div style="left:70px;top:487px;width:141px;height:8px;background:linear-gradient(to bottom,#d8d8d8 0,#4a4a4a 30%,#8a8a8a 50%,#4a4a4a 70%,#d8d8d8 100%);filter:blur(0.8px);opacity:0.85;-webkit-mask-image:linear-gradient(to right,transparent 0,#000 6%,#000 80%,transparent 100%);"></div>
<div style="left:41px;top:485px;width:35px;height:12px;background:#f2d78a;filter:blur(2.2px);border-radius:5px;opacity:0.92"></div>
<div class="t" style="left:-84px;width:400px;text-align:right;top:485px;font-size:11px;line-height:13px;">0,000</div>
<div class="t" style="left:26px;width:400px;text-align:right;top:485px;font-size:11px;line-height:13px;">0,000</div>
<div class="t" style="left:126px;width:400px;text-align:right;top:485px;font-size:11px;line-height:13px;">0,000</div>
<div style="left:25px;top:504px;width:20px;height:10px;background:repeating-linear-gradient(to bottom,transparent 0 1px,#c4cad6 1px 2px,transparent 2px 4px);filter:blur(0.8px);opacity:0.75"></div>
<div style="left:60px;top:503px;width:111px;height:2px;background:#c8c8c8;filter:blur(0.8px);opacity:0.7"></div>
<div style="left:70px;top:505px;width:126px;height:8px;background:linear-gradient(to bottom,#d8d8d8 0,#4a4a4a 30%,#8a8a8a 50%,#4a4a4a 70%,#d8d8d8 100%);filter:blur(0.8px);opacity:0.85;-webkit-mask-image:linear-gradient(to right,transparent 0,#000 6%,#000 80%,transparent 100%);"></div>
<div style="left:41px;top:503px;width:35px;height:12px;background:#f2d78a;filter:blur(2.2px);border-radius:5px;opacity:0.92"></div>
<div class="t" style="left:-84px;width:400px;text-align:right;top:503px;font-size:11px;line-height:13px;">-1883,630</div>
<div class="t" style="left:26px;width:400px;text-align:right;top:503px;font-size:11px;line-height:13px;">5924,940</div>
<div class="t" style="left:126px;width:400px;text-align:right;top:503px;font-size:11px;line-height:13px;">4041,310</div>
<div style="left:25px;top:522px;width:20px;height:10px;background:repeating-linear-gradient(to bottom,transparent 0 1px,#c4cad6 1px 2px,transparent 2px 4px);filter:blur(0.8px);opacity:0.75"></div>
<div style="left:60px;top:521px;width:82px;height:2px;background:#c8c8c8;filter:blur(0.8px);opacity:0.7"></div>
<div style="left:70px;top:523px;width:97px;height:8px;background:linear-gradient(to bottom,#d8d8d8 0,#4a4a4a 30%,#8a8a8a 50%,#4a4a4a 70%,#d8d8d8 100%);filter:blur(0.8px);opacity:0.85;-webkit-mask-image:linear-gradient(to right,transparent 0,#000 6%,#000 80%,transparent 100%);"></div>
<div style="left:41px;top:521px;width:35px;height:12px;background:#f2d78a;filter:blur(2.2px);border-radius:5px;opacity:0.92"></div>
<div class="t" style="left:-84px;width:400px;text-align:right;top:521px;font-size:11px;line-height:13px;">0,000</div>
<div class="t" style="left:26px;width:400px;text-align:right;top:521px;font-size:11px;line-height:13px;">16,180</div>
<div class="t" style="left:126px;width:400px;text-align:right;top:521px;font-size:11px;line-height:13px;">16,180</div>
<div style="left:35px;top:540px;width:10px;height:10px;background:repeating-linear-gradient(to bottom,transparent 0 1px,#c4cad6 1px 2px,transparent 2px 4px);filter:blur(0.8px);opacity:0.75"></div>
<div style="left:60px;top:539px;width:126px;height:2px;background:#c8c8c8;filter:blur(0.8px);opacity:0.7"></div>
<div style="left:70px;top:541px;width:141px;height:8px;background:linear-gradient(to bottom,#d8d8d8 0,#4a4a4a 30%,#8a8a8a 50%,#4a4a4a 70%,#d8d8d8 100%);filter:blur(0.8px);opacity:0.85;-webkit-mask-image:linear-gradient(to right,transparent 0,#000 6%,#000 80%,transparent 100%);"></div>
<div style="left:41px;top:539px;width:35px;height:12px;background:#f2d78a;filter:blur(2.2px);border-radius:5px;opacity:0.92"></div>
<div class="t" style="left:-84px;width:400px;text-align:right;top:539px;font-size:11px;line-height:13px;">0,000</div>
<div class="t" style="left:26px;width:400px;text-align:right;top:539px;font-size:11px;line-height:13px;">0,000</div>
<div class="t" style="left:126px;width:400px;text-align:right;top:539px;font-size:11px;line-height:13px;">0,000</div>
<div style="left:25px;top:558px;width:20px;height:10px;background:repeating-linear-gradient(to bottom,transparent 0 1px,#c4cad6 1px 2px,transparent 2px 4px);filter:blur(0.8px);opacity:0.75"></div>
<div style="left:60px;top:557px;width:91px;height:2px;background:#c8c8c8;filter:blur(0.8px);opacity:0.7"></div>
<div style="left:70px;top:559px;width:106px;height:8px;background:linear-gradient(to bottom,#d8d8d8 0,#4a4a4a 30%,#8a8a8a 50%,#4a4a4a 70%,#d8d8d8 100%);filter:blur(0.8px);opacity:0.85;-webkit-mask-image:linear-gradient(to right,transparent 0,#000 6%,#000 80%,transparent 100%);"></div>
<div style="left:41px;top:557px;width:35px;height:12px;background:#f2d78a;filter:blur(2.2px);border-radius:5px;opacity:0.92"></div>
<div class="t" style="left:-84px;width:400px;text-align:right;top:557px;font-size:11px;line-height:13px;">0,000</div>
<div class="t" style="left:26px;width:400px;text-align:right;top:557px;font-size:11px;line-height:13px;">509,740</div>
<div class="t" style="left:126px;width:400px;text-align:right;top:557px;font-size:11px;line-height:13px;">509,740</div>
<div style="left:35px;top:576px;width:10px;height:10px;background:repeating-linear-gradient(to bottom,transparent 0 1px,#c4cad6 1px 2px,transparent 2px 4px);filter:blur(0.8px);opacity:0.75"></div>
<div style="left:60px;top:575px;width:126px;height:2px;background:#c8c8c8;filter:blur(0.8px);opacity:0.7"></div>
<div style="left:70px;top:577px;width:141px;height:8px;background:linear-gradient(to bottom,#d8d8d8 0,#4a4a4a 30%,#8a8a8a 50%,#4a4a4a 70%,#d8d8d8 100%);filter:blur(0.8px);opacity:0.85;-webkit-mask-image:linear-gradient(to right,transparent 0,#000 6%,#000 80%,transparent 100%);"></div>
<div style="left:41px;top:575px;width:35px;height:12px;background:#f2d78a;filter:blur(2.2px);border-radius:5px;opacity:0.92"></div>
<div class="t" style="left:-84px;width:400px;text-align:right;top:575px;font-size:11px;line-height:13px;">0,000</div>
<div class="t" style="left:26px;width:400px;text-align:right;top:575px;font-size:11px;line-height:13px;">0,000</div>
<div class="t" style="left:126px;width:400px;text-align:right;top:575px;font-size:11px;line-height:13px;">0,000</div>
<div style="left:25px;top:594px;width:20px;height:10px;background:repeating-linear-gradient(to bottom,transparent 0 1px,#c4cad6 1px 2px,transparent 2px 4px);filter:blur(0.8px);opacity:0.75"></div>
<div style="left:60px;top:593px;width:91px;height:2px;background:#c8c8c8;filter:blur(0.8px);opacity:0.7"></div>
<div style="left:70px;top:595px;width:106px;height:8px;background:linear-gradient(to bottom,#d8d8d8 0,#4a4a4a 30%,#8a8a8a 50%,#4a4a4a 70%,#d8d8d8 100%);filter:blur(0.8px);opacity:0.85;-webkit-mask-image:linear-gradient(to right,transparent 0,#000 6%,#000 80%,transparent 100%);"></div>
<div style="left:41px;top:593px;width:35px;height:12px;background:#f2d78a;filter:blur(2.2px);border-radius:5px;opacity:0.92"></div>
<div class="t" style="left:-84px;width:400px;text-align:right;top:593px;font-size:11px;line-height:13px;">0,000</div>
<div class="t" style="left:26px;width:400px;text-align:right;top:593px;font-size:11px;line-height:13px;">0,000</div>
<div class="t" style="left:126px;width:400px;text-align:right;top:593px;font-size:11px;line-height:13px;">0,000</div>
<div style="left:35px;top:612px;width:10px;height:10px;background:repeating-linear-gradient(to bottom,transparent 0 1px,#c4cad6 1px 2px,transparent 2px 4px);filter:blur(0.8px);opacity:0.75"></div>
<div style="left:60px;top:611px;width:131px;height:2px;background:#c8c8c8;filter:blur(0.8px);opacity:0.7"></div>
<div style="left:70px;top:613px;width:146px;height:8px;background:linear-gradient(to bottom,#d8d8d8 0,#4a4a4a 30%,#8a8a8a 50%,#4a4a4a 70%,#d8d8d8 100%);filter:blur(0.8px);opacity:0.85;-webkit-mask-image:linear-gradient(to right,transparent 0,#000 6%,#000 80%,transparent 100%);"></div>
<div style="left:41px;top:611px;width:35px;height:12px;background:#f2d78a;filter:blur(2.2px);border-radius:5px;opacity:0.92"></div>
<div class="t" style="left:-84px;width:400px;text-align:right;top:611px;font-size:11px;line-height:13px;">0,000</div>
<div class="t" style="left:26px;width:400px;text-align:right;top:611px;font-size:11px;line-height:13px;">0,000</div>
<div class="t" style="left:126px;width:400px;text-align:right;top:611px;font-size:11px;line-height:13px;">0,000</div>
<div style="left:25px;top:630px;width:20px;height:10px;background:repeating-linear-gradient(to bottom,transparent 0 1px,#c4cad6 1px 2px,transparent 2px 4px);filter:blur(0.8px);opacity:0.75"></div>
<div style="left:60px;top:629px;width:96px;height:2px;background:#c8c8c8;filter:blur(0.8px);opacity:0.7"></div>
<div style="left:70px;top:631px;width:111px;height:8px;background:linear-gradient(to bottom,#d8d8d8 0,#4a4a4a 30%,#8a8a8a 50%,#4a4a4a 70%,#d8d8d8 100%);filter:blur(0.8px);opacity:0.85;-webkit-mask-image:linear-gradient(to right,transparent 0,#000 6%,#000 80%,transparent 100%);"></div>
<div style="left:41px;top:629px;width:35px;height:12px;background:#f2d78a;filter:blur(2.2px);border-radius:5px;opacity:0.92"></div>
<div class="t" style="left:-84px;width:400px;text-align:right;top:629px;font-size:11px;line-height:13px;">0,000</div>
<div class="t" style="left:26px;width:400px;text-align:right;top:629px;font-size:11px;line-height:13px;">249,580</div>
<div class="t" style="left:126px;width:400px;text-align:right;top:629px;font-size:11px;line-height:13px;">249,580</div>
<div style="left:39px;top:644px;width:1px;height:5px;background:repeating-linear-gradient(to bottom,#a0a0a0 0 1px,transparent 1px 2px);"></div>
<svg style="left:34px;top:649px" width="9" height="9" viewBox="0 0 9 9"><defs><linearGradient id="gb" x1="0" y1="0" x2="0" y2="1"><stop offset="0" stop-color="#fff"/><stop offset="1" stop-color="#d8d8d8"/></linearGradient></defs><rect x="0.5" y="0.5" width="8" height="8" fill="url(#gb)" stroke="#919191"/><path d="M2 4.5 H7" stroke="#2a4a9a"/><path d="M4.5 2 V7" stroke="#2a4a9a"/></svg>
<div style="left:43px;top:653px;width:7px;height:1px;background:repeating-linear-gradient(to right,#a0a0a0 0 1px,transparent 1px 2px);"></div>
<svg style="left:52px;top:644px;" width="18" height="17" viewBox="0 0 18 17"><rect x="3" y="0" width="5" height="2" fill="#e0a800"/>
<rect x="1.5" y="1.5" width="10.5" height="12.5" fill="url(#bxg)" stroke="#c88a00"/>
<path d="M1.5 7.5 H12 M6.8 1.5 V14" stroke="#c88a00" stroke-width="0.8"/>
<path d="M8.5 14.5 Q13 14.5 13.5 10 L12 9 L14.5 6.5 L16.5 9.5 L15 10 Q15 16 9 16.5 Z" fill="#50d030" stroke="#064a06" stroke-width="0.9"/></svg>
<div class="t" style="left:74px;top:647px;font-size:11px;line-height:13px;text-decoration:underline;letter-spacing:-0.7px;">PODSUMOWANIE</div>
<div class="t" style="left:-84px;width:400px;text-align:right;top:647px;font-size:11px;line-height:13px;text-decoration:underline;">-20254,430</div>
<div class="t" style="left:26px;width:400px;text-align:right;top:647px;font-size:11px;line-height:13px;text-decoration:underline;">53682,463</div>
<div class="t" style="left:126px;width:400px;text-align:right;top:647px;font-size:11px;line-height:13px;text-decoration:underline;">33427,963</div>
<div class="t" style="left:15px;top:956px;font-size:11px;line-height:13px;">Data przeliczenia stanów magazynowych: 2015-12-03 08:47:56</div>
<div style="left:567px;top:77px;width:1px;height:63px;background:#a0a0a0;"></div>
<div style="left:568px;top:77px;width:1px;height:63px;background:#ffffff;"></div>
<div style="left:567px;top:140px;width:1092px;height:1px;background:#a0a0a0;"></div>
<div style="left:567px;top:141px;width:1092px;height:1px;background:#ffffff;"></div>
<div class="t" style="left:576px;top:88px;font-size:11px;line-height:13px;">Data od</div>
<div class="t" style="left:576px;top:115px;font-size:11px;line-height:13px;">Data do</div>
<div style="left:629px;top:83px;width:139px;height:21px;background:#fff;border:1px solid #abadb3;"></div>
<div class="t" style="left:637px;top:88px;font-size:11px;line-height:13px;">3</div>
<div class="t" style="left:657px;top:88px;font-size:11px;line-height:13px;">grudnia</div>
<div class="t" style="left:708px;top:88px;font-size:11px;line-height:13px;">2014</div>
<svg style="left:741px;top:87px;" width="22" height="13" viewBox="0 0 22 13"><rect x="1.5" y="2" width="10" height="10.5" fill="#e0e0e0" opacity="0.5"/>
<path d="M0.5 0.5 H10.5 V9 L8.5 11.5 H0.5 Z" fill="#f4f8ff" stroke="#6e6060"/>
<rect x="2" y="3" width="6.5" height="6.5" fill="#b4b8c0"/>
<rect x="3" y="4" width="1" height="1" fill="#fff"/><rect x="3" y="6" width="1" height="1" fill="#fff"/><rect x="3" y="8" width="1" height="1" fill="#fff"/><rect x="5" y="4" width="1" height="1" fill="#fff"/><rect x="5" y="6" width="1" height="1" fill="#fff"/><rect x="5" y="8" width="1" height="1" fill="#fff"/><rect x="7" y="4" width="1" height="1" fill="#fff"/><rect x="7" y="6" width="1" height="1" fill="#fff"/><rect x="7" y="8" width="1" height="1" fill="#fff"/>
<path d="M13 4 H20 L16.5 7.5 Z" fill="#2a4a80"/></svg>
<div style="left:629px;top:110px;width:139px;height:21px;background:#fff;border:1px solid #abadb3;"></div>
<div class="t" style="left:637px;top:115px;font-size:11px;line-height:13px;">3</div>
<div class="t" style="left:657px;top:115px;font-size:11px;line-height:13px;">grudnia</div>
<div class="t" style="left:708px;top:115px;font-size:11px;line-height:13px;">2015</div>
<svg style="left:741px;top:114px;" width="22" height="13" viewBox="0 0 22 13"><rect x="1.5" y="2" width="10" height="10.5" fill="#e0e0e0" opacity="0.5"/>
<path d="M0.5 0.5 H10.5 V9 L8.5 11.5 H0.5 Z" fill="#f4f8ff" stroke="#6e6060"/>
<rect x="2" y="3" width="6.5" height="6.5" fill="#b4b8c0"/>
<rect x="3" y="4" width="1" height="1" fill="#fff"/><rect x="3" y="6" width="1" height="1" fill="#fff"/><rect x="3" y="8" width="1" height="1" fill="#fff"/><rect x="5" y="4" width="1" height="1" fill="#fff"/><rect x="5" y="6" width="1" height="1" fill="#fff"/><rect x="5" y="8" width="1" height="1" fill="#fff"/><rect x="7" y="4" width="1" height="1" fill="#fff"/><rect x="7" y="6" width="1" height="1" fill="#fff"/><rect x="7" y="8" width="1" height="1" fill="#fff"/>
<path d="M13 4 H20 L16.5 7.5 Z" fill="#2a4a80"/></svg>
<div style="left:780px;top:83px;width:79px;height:21px;background:#fff;border:1px solid #abadb3;"></div>
<div class="t" style="left:782px;top:88px;font-size:11px;line-height:13px;">00:00:00</div>
<svg style="left:841px;top:86px;" width="16" height="16" viewBox="0 0 16 16"><path d="M0.5 0 V6.5 H14.5 V0" fill="#f0f0f0" stroke="#a8a8a8"/>
<rect x="0.5" y="8.5" width="14" height="6" fill="#f0f0f0" stroke="#a8a8a8"/>
<path d="M5 5 H10 L7.5 2.2 Z" fill="#000" stroke="#000" stroke-width="0.5"/><path d="M5 10 H10 L7.5 12.8 Z" fill="#000" stroke="#000" stroke-width="0.5"/></svg>
<div style="left:780px;top:110px;width:79px;height:21px;background:#fff;border:1px solid #abadb3;"></div>
<div class="t" style="left:782px;top:115px;font-size:11px;line-height:13px;">08:47:53</div>
<svg style="left:841px;top:113px;" width="16" height="16" viewBox="0 0 16 16"><path d="M0.5 0 V6.5 H14.5 V0" fill="#f0f0f0" stroke="#a8a8a8"/>
<rect x="0.5" y="8.5" width="14" height="6" fill="#f0f0f0" stroke="#a8a8a8"/>
<path d="M5 5 H10 L7.5 2.2 Z" fill="#000" stroke="#000" stroke-width="0.5"/><path d="M5 10 H10 L7.5 12.8 Z" fill="#000" stroke="#000" stroke-width="0.5"/></svg>
<div style="left:870px;top:82px;width:68px;height:23px;border:1px solid #acacac;background:linear-gradient(#f0f0f0,#e5e5e5);"></div>
<svg style="left:877px;top:85px;" width="18" height="18" viewBox="0 0 18 18"><defs><linearGradient id="org" x1="0" y1="0" x2="1" y2="1"><stop offset="0" stop-color="#ffd090"/><stop offset="0.4" stop-color="#ff8a20"/><stop offset="1" stop-color="#f07000"/></linearGradient></defs>
<path d="M1.5 1.5 H12 V6.5 H7 V12 H1.5 Z" fill="url(#org)" stroke="#c85a00"/>
<path d="M6.5 1.5 V12 M1.5 6.5 H12" stroke="#a04a00" stroke-width="0.9"/>
<rect x="10.5" y="8.5" width="5.5" height="5.5" fill="url(#org)" stroke="#c85a00"/>
<path d="M3 11.8 H7.5 V9.8 L11.5 13.3 L7.5 16.8 V14.8 H3 Z" fill="#58d040" stroke="#0a6a0a"/></svg>
<div class="t" style="left:897px;top:88px;font-size:11px;line-height:13px;">Export</div>
<div style="left:946px;top:82px;width:68px;height:23px;border:1px solid #acacac;background:linear-gradient(#f0f0f0,#e5e5e5);"></div>
<svg style="left:953px;top:85px;" width="18" height="17" viewBox="0 0 18 17"><rect x="1.5" y="3.5" width="9" height="12.5" fill="#e0f2ff" stroke="#4a5aa8"/>
<path d="M3 10.5 H9 M3 12.5 H9" stroke="#9cc8f0"/>
<path d="M3 7.5 L7 3 L10 1.5 L12.5 3 L12 6 L8 9.5 L5 10 Z" fill="#c8782a"/>
<path d="M4 7.5 L8 4 M5 8.5 L9 5" stroke="#f8d080" stroke-width="0.6" stroke-dasharray="1 1"/>
<rect x="12.3" y="1" width="4.5" height="8" fill="#222"/>
<rect x="11" y="2.5" width="1.5" height="5" fill="#777"/></svg>
<div class="t" style="left:974px;top:88px;font-size:11px;line-height:13px;">Drukuj</div>
<div style="left:870px;top:111px;width:144px;height:23px;border:1px solid #acacac;background:linear-gradient(#f0f0f0,#e5e5e5);"></div>
<svg style="left:895px;top:113px;" width="18" height="19" viewBox="0 0 18 19"><defs><radialGradient id="lg" cx="0.6" cy="0.6" r="0.7"><stop offset="0" stop-color="#ffffff"/><stop offset="0.5" stop-color="#c8f8ff"/><stop offset="1" stop-color="#5aa0f0"/></radialGradient></defs>
<path d="M2.5 17.5 L7.8 12.2" stroke="#3a3060" stroke-width="3.6"/>
<path d="M2.5 17.5 L7.8 12.2" stroke="#f08a1a" stroke-width="2.6"/>
<circle cx="11.4" cy="7.3" r="5" fill="url(#lg)" stroke="#3a4aa0" stroke-width="1.1"/></svg>
<div class="t" style="left:916px;top:117px;font-size:11px;line-height:13px;">Szukaj (Ctrl+F)</div>
<div style="left:567px;top:142px;width:1092px;height:20px;background:#808080;"></div>
<div class="t" style="left:573px;top:145px;font-size:12px;line-height:14px;color:#fff;font-weight:bold;letter-spacing:-0.05px;">Lista operacji dla elementu: &quot;17 09 04  Zmieszane odpady z budowy, remontów i demontażu inne niż wymienione w 17 09 01, 17 09 02 i 17 09 03&quot; w magazynie:</div>
<div style="left:1472px;top:147px;width:53px;height:9px;background:linear-gradient(to bottom,#a8a8a8,#c8c8c8 40%,#b0b0b0 70%,#c0c0c0);filter:blur(0.4px);"></div>
<div style="left:567px;top:162px;width:1092px;height:795px;background:#fff;"></div>
<div style="left:567px;top:162px;width:1092px;height:16px;background:#fbfcfd;"></div>
<div style="left:567px;top:178px;width:1092px;height:1px;background:#e3ebf6;"></div>
<div style="left:746px;top:162px;width:1px;height:16px;background:#e3ebf6;"></div>
<div style="left:886px;top:162px;width:1px;height:16px;background:#e3ebf6;"></div>
<div style="left:961px;top:162px;width:1px;height:16px;background:#e3ebf6;"></div>
<div style="left:1021px;top:162px;width:1px;height:16px;background:#e3ebf6;"></div>
<div style="left:1131px;top:162px;width:1px;height:16px;background:#e3ebf6;"></div>
<div style="left:1242px;top:162px;width:1px;height:16px;background:#e3ebf6;"></div>
<div style="left:1342px;top:162px;width:1px;height:16px;background:#e3ebf6;"></div>
<div style="left:1491px;top:162px;width:1px;height:16px;background:#e3ebf6;"></div>
<div style="left:1581px;top:162px;width:1px;height:16px;background:#e3ebf6;"></div>
<div class="t" style="left:573px;top:165px;font-size:11px;line-height:13px;">Data operacji</div>
<div class="t" style="left:481px;width:400px;text-align:right;top:165px;font-size:11px;line-height:13px;">Typ operacji</div>
<div class="t" style="left:555px;width:400px;text-align:right;top:165px;font-size:11px;line-height:13px;">Nr ważenia</div>
<div class="t" style="left:615px;width:400px;text-align:right;top:165px;font-size:11px;line-height:13px;">Netto</div>
<div class="t" style="left:725px;width:400px;text-align:right;top:165px;font-size:11px;line-height:13px;">Stan (wydania)</div>
<div class="t" style="left:836px;width:400px;text-align:right;top:165px;font-size:11px;line-height:13px;">Stan (przyjęcia)</div>
<div class="t" style="left:935px;width:400px;text-align:right;top:165px;font-size:11px;line-height:13px;">Stan ogółem</div>
<div class="t" style="left:1085px;width:400px;text-align:right;top:165px;font-size:11px;line-height:13px;">Użytkownik</div>
<div class="t" style="left:1497px;top:165px;font-size:11px;line-height:13px;">Nr rej.</div>
<div style="left:1587px;top:165px;width:72px;height:14px;overflow:hidden;"><div class="t" style="left:0;top:0;font-size:11px;line-height:13px;">Stanowisko wagi</div></div>
<div style="left:746px;top:179px;width:1px;height:360px;background:repeating-linear-gradient(to bottom,#e2e2e2 0 1px,transparent 1px 2px);"></div>
<div style="left:886px;top:179px;width:1px;height:360px;background:repeating-linear-gradient(to bottom,#e2e2e2 0 1px,transparent 1px 2px);"></div>
<div style="left:961px;top:179px;width:1px;height:360px;background:repeating-linear-gradient(to bottom,#e2e2e2 0 1px,transparent 1px 2px);"></div>
<div style="left:1021px;top:179px;width:1px;height:360px;background:repeating-linear-gradient(to bottom,#e2e2e2 0 1px,transparent 1px 2px);"></div>
<div style="left:1131px;top:179px;width:1px;height:360px;background:repeating-linear-gradient(to bottom,#e2e2e2 0 1px,transparent 1px 2px);"></div>
<div style="left:1242px;top:179px;width:1px;height:360px;background:repeating-linear-gradient(to bottom,#e2e2e2 0 1px,transparent 1px 2px);"></div>
<div style="left:1342px;top:179px;width:1px;height:360px;background:repeating-linear-gradient(to bottom,#e2e2e2 0 1px,transparent 1px 2px);"></div>
<div style="left:1491px;top:179px;width:1px;height:360px;background:repeating-linear-gradient(to bottom,#e2e2e2 0 1px,transparent 1px 2px);"></div>
<div style="left:1581px;top:179px;width:1px;height:360px;background:repeating-linear-gradient(to bottom,#e2e2e2 0 1px,transparent 1px 2px);"></div>
<div style="left:567px;top:196px;width:1092px;height:1px;background:repeating-linear-gradient(to right,#dcdcdc 0 1px,transparent 1px 2px);"></div>
<svg style="left:592px;top:183px;" width="9" height="9" viewBox="0 0 9 9"><rect x="3" y="0" width="3" height="9" fill="#0a8a0a"/><rect x="0" y="3" width="9" height="3" fill="#0a8a0a"/><rect x="4" y="1" width="1" height="7" fill="#70e050"/><rect x="1" y="4" width="7" height="1" fill="#70e050"/></svg>
<div class="t" style="left:611px;top:182px;font-size:11px;line-height:13px;">2015-06-20 12:26:28</div>
<div class="t" style="left:481px;width:400px;text-align:right;top:182px;font-size:11px;line-height:13px;">Przyjęcie zewnętrzne</div>
<div class="t" style="left:555px;width:400px;text-align:right;top:182px;font-size:11px;line-height:13px;">7542/2015</div>
<div class="t" style="left:615px;width:400px;text-align:right;top:182px;font-size:11px;line-height:13px;">0,300</div>
<div class="t" style="left:725px;width:400px;text-align:right;top:182px;font-size:11px;line-height:13px;">0,000</div>
<div class="t" style="left:836px;width:400px;text-align:right;top:182px;font-size:11px;line-height:13px;">3,290</div>
<div class="t" style="left:935px;width:400px;text-align:right;top:182px;font-size:11px;line-height:13px;">3,290</div>
<div class="t" style="left:1590px;top:182px;font-size:11px;line-height:13px;">Waga 1</div>
<div style="left:567px;top:214px;width:1092px;height:1px;background:repeating-linear-gradient(to right,#dcdcdc 0 1px,transparent 1px 2px);"></div>
<svg style="left:592px;top:201px;" width="9" height="9" viewBox="0 0 9 9"><rect x="3" y="0" width="3" height="9" fill="#0a8a0a"/><rect x="0" y="3" width="9" height="3" fill="#0a8a0a"/><rect x="4" y="1" width="1" height="7" fill="#70e050"/><rect x="1" y="4" width="7" height="1" fill="#70e050"/></svg>
<div class="t" style="left:611px;top:200px;font-size:11px;line-height:13px;">2015-06-20 12:26:28</div>
<div class="t" style="left:481px;width:400px;text-align:right;top:200px;font-size:11px;line-height:13px;">Przyjęcie zewnętrzne</div>
<div class="t" style="left:555px;width:400px;text-align:right;top:200px;font-size:11px;line-height:13px;">7542-2/2015</div>
<div class="t" style="left:615px;width:400px;text-align:right;top:200px;font-size:11px;line-height:13px;">0,300</div>
<div class="t" style="left:725px;width:400px;text-align:right;top:200px;font-size:11px;line-height:13px;">0,000</div>
<div class="t" style="left:836px;width:400px;text-align:right;top:200px;font-size:11px;line-height:13px;">3,590</div>
<div class="t" style="left:935px;width:400px;text-align:right;top:200px;font-size:11px;line-height:13px;">3,590</div>
<div class="t" style="left:1590px;top:200px;font-size:11px;line-height:13px;">Waga 1</div>
<div style="left:567px;top:232px;width:1092px;height:1px;background:repeating-linear-gradient(to right,#dcdcdc 0 1px,transparent 1px 2px);"></div>
<svg style="left:592px;top:219px;" width="9" height="9" viewBox="0 0 9 9"><rect x="3" y="0" width="3" height="9" fill="#0a8a0a"/><rect x="0" y="3" width="9" height="3" fill="#0a8a0a"/><rect x="4" y="1" width="1" height="7" fill="#70e050"/><rect x="1" y="4" width="7" height="1" fill="#70e050"/></svg>
<div class="t" style="left:611px;top:218px;font-size:11px;line-height:13px;">2015-06-20 12:26:28</div>
<div class="t" style="left:481px;width:400px;text-align:right;top:218px;font-size:11px;line-height:13px;">Przyjęcie zewnętrzne</div>
<div class="t" style="left:555px;width:400px;text-align:right;top:218px;font-size:11px;line-height:13px;">7542-3/2015</div>
<div class="t" style="left:615px;width:400px;text-align:right;top:218px;font-size:11px;line-height:13px;">0,300</div>
<div class="t" style="left:725px;width:400px;text-align:right;top:218px;font-size:11px;line-height:13px;">0,000</div>
<div class="t" style="left:836px;width:400px;text-align:right;top:218px;font-size:11px;line-height:13px;">3,890</div>
<div class="t" style="left:935px;width:400px;text-align:right;top:218px;font-size:11px;line-height:13px;">3,890</div>
<div class="t" style="left:1590px;top:218px;font-size:11px;line-height:13px;">Waga 1</div>
<div style="left:567px;top:250px;width:1092px;height:1px;background:repeating-linear-gradient(to right,#dcdcdc 0 1px,transparent 1px 2px);"></div>
<svg style="left:592px;top:237px;" width="9" height="9" viewBox="0 0 9 9"><rect x="3" y="0" width="3" height="9" fill="#0a8a0a"/><rect x="0" y="3" width="9" height="3" fill="#0a8a0a"/><rect x="4" y="1" width="1" height="7" fill="#70e050"/><rect x="1" y="4" width="7" height="1" fill="#70e050"/></svg>
<div class="t" style="left:611px;top:236px;font-size:11px;line-height:13px;">2015-06-20 12:26:28</div>
<div class="t" style="left:481px;width:400px;text-align:right;top:236px;font-size:11px;line-height:13px;">Przyjęcie zewnętrzne</div>
<div class="t" style="left:555px;width:400px;text-align:right;top:236px;font-size:11px;line-height:13px;">7542-4/2015</div>
<div class="t" style="left:615px;width:400px;text-align:right;top:236px;font-size:11px;line-height:13px;">0,300</div>
<div class="t" style="left:725px;width:400px;text-align:right;top:236px;font-size:11px;line-height:13px;">0,000</div>
<div class="t" style="left:836px;width:400px;text-align:right;top:236px;font-size:11px;line-height:13px;">4,170</div>
<div class="t" style="left:935px;width:400px;text-align:right;top:236px;font-size:11px;line-height:13px;">4,170</div>
<div class="t" style="left:1590px;top:236px;font-size:11px;line-height:13px;">Waga 1</div>
<div style="left:567px;top:268px;width:1092px;height:1px;background:repeating-linear-gradient(to right,#dcdcdc 0 1px,transparent 1px 2px);"></div>
<svg style="left:592px;top:255px;" width="9" height="9" viewBox="0 0 9 9"><rect x="3" y="0" width="3" height="9" fill="#0a8a0a"/><rect x="0" y="3" width="9" height="3" fill="#0a8a0a"/><rect x="4" y="1" width="1" height="7" fill="#70e050"/><rect x="1" y="4" width="7" height="1" fill="#70e050"/></svg>
<div class="t" style="left:611px;top:254px;font-size:11px;line-height:13px;">2015-06-20 12:26:28</div>
<div class="t" style="left:481px;width:400px;text-align:right;top:254px;font-size:11px;line-height:13px;">Przyjęcie zewnętrzne</div>
<div class="t" style="left:555px;width:400px;text-align:right;top:254px;font-size:11px;line-height:13px;">7542-5/2015</div>
<div class="t" style="left:615px;width:400px;text-align:right;top:254px;font-size:11px;line-height:13px;">0,300</div>
<div class="t" style="left:725px;width:400px;text-align:right;top:254px;font-size:11px;line-height:13px;">0,000</div>
<div class="t" style="left:836px;width:400px;text-align:right;top:254px;font-size:11px;line-height:13px;">2,990</div>
<div class="t" style="left:935px;width:400px;text-align:right;top:254px;font-size:11px;line-height:13px;">2,990</div>
<div class="t" style="left:1590px;top:254px;font-size:11px;line-height:13px;">Waga 1</div>
<div style="left:567px;top:286px;width:1092px;height:1px;background:repeating-linear-gradient(to right,#dcdcdc 0 1px,transparent 1px 2px);"></div>
<svg style="left:592px;top:273px;" width="9" height="9" viewBox="0 0 9 9"><rect x="3" y="0" width="3" height="9" fill="#0a8a0a"/><rect x="0" y="3" width="9" height="3" fill="#0a8a0a"/><rect x="4" y="1" width="1" height="7" fill="#70e050"/><rect x="1" y="4" width="7" height="1" fill="#70e050"/></svg>
<div class="t" style="left:611px;top:272px;font-size:11px;line-height:13px;">2015-06-20 12:26:28</div>
<div class="t" style="left:481px;width:400px;text-align:right;top:272px;font-size:11px;line-height:13px;">Przyjęcie zewnętrzne</div>
<div class="t" style="left:555px;width:400px;text-align:right;top:272px;font-size:11px;line-height:13px;">7542-6/2015</div>
<div class="t" style="left:615px;width:400px;text-align:right;top:272px;font-size:11px;line-height:13px;">0,300</div>
<div class="t" style="left:725px;width:400px;text-align:right;top:272px;font-size:11px;line-height:13px;">0,000</div>
<div class="t" style="left:836px;width:400px;text-align:right;top:272px;font-size:11px;line-height:13px;">2,690</div>
<div class="t" style="left:935px;width:400px;text-align:right;top:272px;font-size:11px;line-height:13px;">2,690</div>
<div class="t" style="left:1590px;top:272px;font-size:11px;line-height:13px;">Waga 1</div>
<div style="left:567px;top:304px;width:1092px;height:1px;background:repeating-linear-gradient(to right,#dcdcdc 0 1px,transparent 1px 2px);"></div>
<svg style="left:592px;top:291px;" width="9" height="9" viewBox="0 0 9 9"><rect x="3" y="0" width="3" height="9" fill="#0a8a0a"/><rect x="0" y="3" width="9" height="3" fill="#0a8a0a"/><rect x="4" y="1" width="1" height="7" fill="#70e050"/><rect x="1" y="4" width="7" height="1" fill="#70e050"/></svg>
<div class="t" style="left:611px;top:290px;font-size:11px;line-height:13px;">2015-06-20 12:26:28</div>
<div class="t" style="left:481px;width:400px;text-align:right;top:290px;font-size:11px;line-height:13px;">Przyjęcie zewnętrzne</div>
<div class="t" style="left:555px;width:400px;text-align:right;top:290px;font-size:11px;line-height:13px;">7542-7/2015</div>
<div class="t" style="left:615px;width:400px;text-align:right;top:290px;font-size:11px;line-height:13px;">0,300</div>
<div class="t" style="left:725px;width:400px;text-align:right;top:290px;font-size:11px;line-height:13px;">0,000</div>
<div class="t" style="left:836px;width:400px;text-align:right;top:290px;font-size:11px;line-height:13px;">2,670</div>
<div class="t" style="left:935px;width:400px;text-align:right;top:290px;font-size:11px;line-height:13px;">2,670</div>
<div class="t" style="left:1590px;top:290px;font-size:11px;line-height:13px;">Waga 1</div>
<div style="left:567px;top:322px;width:1092px;height:1px;background:repeating-linear-gradient(to right,#dcdcdc 0 1px,transparent 1px 2px);"></div>
<svg style="left:592px;top:309px;" width="9" height="9" viewBox="0 0 9 9"><rect x="3" y="0" width="3" height="9" fill="#0a8a0a"/><rect x="0" y="3" width="9" height="3" fill="#0a8a0a"/><rect x="4" y="1" width="1" height="7" fill="#70e050"/><rect x="1" y="4" width="7" height="1" fill="#70e050"/></svg>
<div class="t" style="left:611px;top:308px;font-size:11px;line-height:13px;">2015-06-20 12:26:28</div>
<div class="t" style="left:481px;width:400px;text-align:right;top:308px;font-size:11px;line-height:13px;">Przyjęcie zewnętrzne</div>
<div class="t" style="left:555px;width:400px;text-align:right;top:308px;font-size:11px;line-height:13px;">7542-8/2015</div>
<div class="t" style="left:615px;width:400px;text-align:right;top:308px;font-size:11px;line-height:13px;">0,300</div>
<div class="t" style="left:725px;width:400px;text-align:right;top:308px;font-size:11px;line-height:13px;">0,000</div>
<div class="t" style="left:836px;width:400px;text-align:right;top:308px;font-size:11px;line-height:13px;">2,630</div>
<div class="t" style="left:935px;width:400px;text-align:right;top:308px;font-size:11px;line-height:13px;">2,630</div>
<div class="t" style="left:1590px;top:308px;font-size:11px;line-height:13px;">Waga 1</div>
<div style="left:567px;top:340px;width:1092px;height:1px;background:repeating-linear-gradient(to right,#dcdcdc 0 1px,transparent 1px 2px);"></div>
<svg style="left:592px;top:327px;" width="9" height="9" viewBox="0 0 9 9"><rect x="3" y="0" width="3" height="9" fill="#0a8a0a"/><rect x="0" y="3" width="9" height="3" fill="#0a8a0a"/><rect x="4" y="1" width="1" height="7" fill="#70e050"/><rect x="1" y="4" width="7" height="1" fill="#70e050"/></svg>
<div class="t" style="left:611px;top:326px;font-size:11px;line-height:13px;">2015-06-20 12:26:28</div>
<div class="t" style="left:481px;width:400px;text-align:right;top:326px;font-size:11px;line-height:13px;">Przyjęcie zewnętrzne</div>
<div class="t" style="left:555px;width:400px;text-align:right;top:326px;font-size:11px;line-height:13px;">7542-9/2015</div>
<div class="t" style="left:615px;width:400px;text-align:right;top:326px;font-size:11px;line-height:13px;">0,300</div>
<div class="t" style="left:725px;width:400px;text-align:right;top:326px;font-size:11px;line-height:13px;">0,000</div>
<div class="t" style="left:836px;width:400px;text-align:right;top:326px;font-size:11px;line-height:13px;">2,350</div>
<div class="t" style="left:935px;width:400px;text-align:right;top:326px;font-size:11px;line-height:13px;">2,350</div>
<div class="t" style="left:1590px;top:326px;font-size:11px;line-height:13px;">Waga 1</div>
<div style="left:567px;top:358px;width:1092px;height:1px;background:repeating-linear-gradient(to right,#dcdcdc 0 1px,transparent 1px 2px);"></div>
<svg style="left:592px;top:345px;" width="9" height="9" viewBox="0 0 9 9"><rect x="3" y="0" width="3" height="9" fill="#0a8a0a"/><rect x="0" y="3" width="9" height="3" fill="#0a8a0a"/><rect x="4" y="1" width="1" height="7" fill="#70e050"/><rect x="1" y="4" width="7" height="1" fill="#70e050"/></svg>
<div class="t" style="left:611px;top:344px;font-size:11px;line-height:13px;">2015-06-20 12:26:28</div>
<div class="t" style="left:481px;width:400px;text-align:right;top:344px;font-size:11px;line-height:13px;">Przyjęcie zewnętrzne</div>
<div class="t" style="left:555px;width:400px;text-align:right;top:344px;font-size:11px;line-height:13px;">7542-10/2015</div>
<div class="t" style="left:615px;width:400px;text-align:right;top:344px;font-size:11px;line-height:13px;">0,300</div>
<div class="t" style="left:725px;width:400px;text-align:right;top:344px;font-size:11px;line-height:13px;">0,000</div>
<div class="t" style="left:836px;width:400px;text-align:right;top:344px;font-size:11px;line-height:13px;">2,190</div>
<div class="t" style="left:935px;width:400px;text-align:right;top:344px;font-size:11px;line-height:13px;">2,190</div>
<div class="t" style="left:1590px;top:344px;font-size:11px;line-height:13px;">Waga 1</div>
<div style="left:567px;top:376px;width:1092px;height:1px;background:repeating-linear-gradient(to right,#dcdcdc 0 1px,transparent 1px 2px);"></div>
<svg style="left:592px;top:363px;" width="9" height="9" viewBox="0 0 9 9"><rect x="3" y="0" width="3" height="9" fill="#0a8a0a"/><rect x="0" y="3" width="9" height="3" fill="#0a8a0a"/><rect x="4" y="1" width="1" height="7" fill="#70e050"/><rect x="1" y="4" width="7" height="1" fill="#70e050"/></svg>
<div class="t" style="left:611px;top:362px;font-size:11px;line-height:13px;">2015-06-20 12:26:28</div>
<div class="t" style="left:481px;width:400px;text-align:right;top:362px;font-size:11px;line-height:13px;">Przyjęcie zewnętrzne</div>
<div class="t" style="left:555px;width:400px;text-align:right;top:362px;font-size:11px;line-height:13px;">7542-11/2015</div>
<div class="t" style="left:615px;width:400px;text-align:right;top:362px;font-size:11px;line-height:13px;">0,300</div>
<div class="t" style="left:725px;width:400px;text-align:right;top:362px;font-size:11px;line-height:13px;">0,000</div>
<div class="t" style="left:836px;width:400px;text-align:right;top:362px;font-size:11px;line-height:13px;">2,180</div>
<div class="t" style="left:935px;width:400px;text-align:right;top:362px;font-size:11px;line-height:13px;">2,180</div>
<div class="t" style="left:1590px;top:362px;font-size:11px;line-height:13px;">Waga 1</div>
<div style="left:567px;top:394px;width:1092px;height:1px;background:repeating-linear-gradient(to right,#dcdcdc 0 1px,transparent 1px 2px);"></div>
<svg style="left:592px;top:381px;" width="9" height="9" viewBox="0 0 9 9"><rect x="3" y="0" width="3" height="9" fill="#0a8a0a"/><rect x="0" y="3" width="9" height="3" fill="#0a8a0a"/><rect x="4" y="1" width="1" height="7" fill="#70e050"/><rect x="1" y="4" width="7" height="1" fill="#70e050"/></svg>
<div class="t" style="left:611px;top:380px;font-size:11px;line-height:13px;">2015-06-20 12:26:28</div>
<div class="t" style="left:481px;width:400px;text-align:right;top:380px;font-size:11px;line-height:13px;">Przyjęcie zewnętrzne</div>
<div class="t" style="left:555px;width:400px;text-align:right;top:380px;font-size:11px;line-height:13px;">7542-12/2015</div>
<div class="t" style="left:615px;width:400px;text-align:right;top:380px;font-size:11px;line-height:13px;">0,300</div>
<div class="t" style="left:725px;width:400px;text-align:right;top:380px;font-size:11px;line-height:13px;">0,000</div>
<div class="t" style="left:836px;width:400px;text-align:right;top:380px;font-size:11px;line-height:13px;">1,720</div>
<div class="t" style="left:935px;width:400px;text-align:right;top:380px;font-size:11px;line-height:13px;">1,720</div>
<div class="t" style="left:1590px;top:380px;font-size:11px;line-height:13px;">Waga 1</div>
<div style="left:567px;top:412px;width:1092px;height:1px;background:repeating-linear-gradient(to right,#dcdcdc 0 1px,transparent 1px 2px);"></div>
<svg style="left:592px;top:399px;" width="9" height="9" viewBox="0 0 9 9"><rect x="3" y="0" width="3" height="9" fill="#0a8a0a"/><rect x="0" y="3" width="9" height="3" fill="#0a8a0a"/><rect x="4" y="1" width="1" height="7" fill="#70e050"/><rect x="1" y="4" width="7" height="1" fill="#70e050"/></svg>
<div class="t" style="left:611px;top:398px;font-size:11px;line-height:13px;">2015-06-20 12:26:28</div>
<div class="t" style="left:481px;width:400px;text-align:right;top:398px;font-size:11px;line-height:13px;">Przyjęcie zewnętrzne</div>
<div class="t" style="left:555px;width:400px;text-align:right;top:398px;font-size:11px;line-height:13px;">7542-13/2015</div>
<div class="t" style="left:615px;width:400px;text-align:right;top:398px;font-size:11px;line-height:13px;">0,300</div>
<div class="t" style="left:725px;width:400px;text-align:right;top:398px;font-size:11px;line-height:13px;">0,000</div>
<div class="t" style="left:836px;width:400px;text-align:right;top:398px;font-size:11px;line-height:13px;">2,020</div>
<div class="t" style="left:935px;width:400px;text-align:right;top:398px;font-size:11px;line-height:13px;">2,020</div>
<div class="t" style="left:1590px;top:398px;font-size:11px;line-height:13px;">Waga 1</div>
<div style="left:567px;top:430px;width:1092px;height:1px;background:repeating-linear-gradient(to right,#dcdcdc 0 1px,transparent 1px 2px);"></div>
<svg style="left:592px;top:417px;" width="9" height="9" viewBox="0 0 9 9"><rect x="3" y="0" width="3" height="9" fill="#0a8a0a"/><rect x="0" y="3" width="9" height="3" fill="#0a8a0a"/><rect x="4" y="1" width="1" height="7" fill="#70e050"/><rect x="1" y="4" width="7" height="1" fill="#70e050"/></svg>
<div class="t" style="left:611px;top:416px;font-size:11px;line-height:13px;">2015-06-20 12:26:28</div>
<div class="t" style="left:481px;width:400px;text-align:right;top:416px;font-size:11px;line-height:13px;">Przyjęcie zewnętrzne</div>
<div class="t" style="left:555px;width:400px;text-align:right;top:416px;font-size:11px;line-height:13px;">7542-14/2015</div>
<div class="t" style="left:615px;width:400px;text-align:right;top:416px;font-size:11px;line-height:13px;">0,300</div>
<div class="t" style="left:725px;width:400px;text-align:right;top:416px;font-size:11px;line-height:13px;">0,000</div>
<div class="t" style="left:836px;width:400px;text-align:right;top:416px;font-size:11px;line-height:13px;">2,060</div>
<div class="t" style="left:935px;width:400px;text-align:right;top:416px;font-size:11px;line-height:13px;">2,060</div>
<div class="t" style="left:1590px;top:416px;font-size:11px;line-height:13px;">Waga 1</div>
<div style="left:567px;top:448px;width:1092px;height:1px;background:repeating-linear-gradient(to right,#dcdcdc 0 1px,transparent 1px 2px);"></div>
<svg style="left:592px;top:435px;" width="9" height="9" viewBox="0 0 9 9"><rect x="3" y="0" width="3" height="9" fill="#0a8a0a"/><rect x="0" y="3" width="9" height="3" fill="#0a8a0a"/><rect x="4" y="1" width="1" height="7" fill="#70e050"/><rect x="1" y="4" width="7" height="1" fill="#70e050"/></svg>
<div class="t" style="left:611px;top:434px;font-size:11px;line-height:13px;">2015-06-20 12:26:28</div>
<div class="t" style="left:481px;width:400px;text-align:right;top:434px;font-size:11px;line-height:13px;">Przyjęcie zewnętrzne</div>
<div class="t" style="left:555px;width:400px;text-align:right;top:434px;font-size:11px;line-height:13px;">7542-15/2015</div>
<div class="t" style="left:615px;width:400px;text-align:right;top:434px;font-size:11px;line-height:13px;">0,300</div>
<div class="t" style="left:725px;width:400px;text-align:right;top:434px;font-size:11px;line-height:13px;">0,000</div>
<div class="t" style="left:836px;width:400px;text-align:right;top:434px;font-size:11px;line-height:13px;">1,420</div>
<div class="t" style="left:935px;width:400px;text-align:right;top:434px;font-size:11px;line-height:13px;">1,420</div>
<div class="t" style="left:1590px;top:434px;font-size:11px;line-height:13px;">Waga 1</div>
<div style="left:567px;top:466px;width:1092px;height:1px;background:repeating-linear-gradient(to right,#dcdcdc 0 1px,transparent 1px 2px);"></div>
<svg style="left:592px;top:453px;" width="9" height="9" viewBox="0 0 9 9"><rect x="3" y="0" width="3" height="9" fill="#0a8a0a"/><rect x="0" y="3" width="9" height="3" fill="#0a8a0a"/><rect x="4" y="1" width="1" height="7" fill="#70e050"/><rect x="1" y="4" width="7" height="1" fill="#70e050"/></svg>
<div class="t" style="left:611px;top:452px;font-size:11px;line-height:13px;">2015-06-20 12:26:28</div>
<div class="t" style="left:481px;width:400px;text-align:right;top:452px;font-size:11px;line-height:13px;">Przyjęcie zewnętrzne</div>
<div class="t" style="left:555px;width:400px;text-align:right;top:452px;font-size:11px;line-height:13px;">7542-16/2015</div>
<div class="t" style="left:615px;width:400px;text-align:right;top:452px;font-size:11px;line-height:13px;">0,300</div>
<div class="t" style="left:725px;width:400px;text-align:right;top:452px;font-size:11px;line-height:13px;">0,000</div>
<div class="t" style="left:836px;width:400px;text-align:right;top:452px;font-size:11px;line-height:13px;">1,100</div>
<div class="t" style="left:935px;width:400px;text-align:right;top:452px;font-size:11px;line-height:13px;">1,100</div>
<div class="t" style="left:1590px;top:452px;font-size:11px;line-height:13px;">Waga 1</div>
<div style="left:567px;top:484px;width:1092px;height:1px;background:repeating-linear-gradient(to right,#dcdcdc 0 1px,transparent 1px 2px);"></div>
<svg style="left:592px;top:471px;" width="9" height="9" viewBox="0 0 9 9"><rect x="3" y="0" width="3" height="9" fill="#0a8a0a"/><rect x="0" y="3" width="9" height="3" fill="#0a8a0a"/><rect x="4" y="1" width="1" height="7" fill="#70e050"/><rect x="1" y="4" width="7" height="1" fill="#70e050"/></svg>
<div class="t" style="left:611px;top:470px;font-size:11px;line-height:13px;">2015-06-20 12:26:28</div>
<div class="t" style="left:481px;width:400px;text-align:right;top:470px;font-size:11px;line-height:13px;">Przyjęcie zewnętrzne</div>
<div class="t" style="left:555px;width:400px;text-align:right;top:470px;font-size:11px;line-height:13px;">7542-17/2015</div>
<div class="t" style="left:615px;width:400px;text-align:right;top:470px;font-size:11px;line-height:13px;">0,300</div>
<div class="t" style="left:725px;width:400px;text-align:right;top:470px;font-size:11px;line-height:13px;">0,000</div>
<div class="t" style="left:836px;width:400px;text-align:right;top:470px;font-size:11px;line-height:13px;">0,800</div>
<div class="t" style="left:935px;width:400px;text-align:right;top:470px;font-size:11px;line-height:13px;">0,800</div>
<div class="t" style="left:1590px;top:470px;font-size:11px;line-height:13px;">Waga 1</div>
<div style="left:567px;top:502px;width:1092px;height:1px;background:repeating-linear-gradient(to right,#dcdcdc 0 1px,transparent 1px 2px);"></div>
<svg style="left:592px;top:489px;" width="9" height="9" viewBox="0 0 9 9"><rect x="3" y="0" width="3" height="9" fill="#0a8a0a"/><rect x="0" y="3" width="9" height="3" fill="#0a8a0a"/><rect x="4" y="1" width="1" height="7" fill="#70e050"/><rect x="1" y="4" width="7" height="1" fill="#70e050"/></svg>
<div class="t" style="left:611px;top:488px;font-size:11px;line-height:13px;">2015-06-20 12:26:28</div>
<div class="t" style="left:481px;width:400px;text-align:right;top:488px;font-size:11px;line-height:13px;">Przyjęcie zewnętrzne</div>
<div class="t" style="left:555px;width:400px;text-align:right;top:488px;font-size:11px;line-height:13px;">7542-18/2015</div>
<div class="t" style="left:615px;width:400px;text-align:right;top:488px;font-size:11px;line-height:13px;">0,300</div>
<div class="t" style="left:725px;width:400px;text-align:right;top:488px;font-size:11px;line-height:13px;">0,000</div>
<div class="t" style="left:836px;width:400px;text-align:right;top:488px;font-size:11px;line-height:13px;">0,320</div>
<div class="t" style="left:935px;width:400px;text-align:right;top:488px;font-size:11px;line-height:13px;">0,320</div>
<div class="t" style="left:1590px;top:488px;font-size:11px;line-height:13px;">Waga 1</div>
<div style="left:567px;top:520px;width:1092px;height:1px;background:repeating-linear-gradient(to right,#dcdcdc 0 1px,transparent 1px 2px);"></div>
<svg style="left:592px;top:507px;" width="9" height="9" viewBox="0 0 9 9"><rect x="3" y="0" width="3" height="9" fill="#0a8a0a"/><rect x="0" y="3" width="9" height="3" fill="#0a8a0a"/><rect x="4" y="1" width="1" height="7" fill="#70e050"/><rect x="1" y="4" width="7" height="1" fill="#70e050"/></svg>
<div class="t" style="left:611px;top:506px;font-size:11px;line-height:13px;">2015-06-20 12:26:28</div>
<div class="t" style="left:481px;width:400px;text-align:right;top:506px;font-size:11px;line-height:13px;">Przyjęcie zewnętrzne</div>
<div class="t" style="left:555px;width:400px;text-align:right;top:506px;font-size:11px;line-height:13px;">7542-19/2015</div>
<div class="t" style="left:615px;width:400px;text-align:right;top:506px;font-size:11px;line-height:13px;">0,300</div>
<div class="t" style="left:725px;width:400px;text-align:right;top:506px;font-size:11px;line-height:13px;">0,000</div>
<div class="t" style="left:836px;width:400px;text-align:right;top:506px;font-size:11px;line-height:13px;">0,620</div>
<div class="t" style="left:935px;width:400px;text-align:right;top:506px;font-size:11px;line-height:13px;">0,620</div>
<div class="t" style="left:1590px;top:506px;font-size:11px;line-height:13px;">Waga 1</div>
<div style="left:567px;top:538px;width:1092px;height:1px;background:repeating-linear-gradient(to right,#dcdcdc 0 1px,transparent 1px 2px);"></div>
<svg style="left:592px;top:525px;" width="9" height="9" viewBox="0 0 9 9"><rect x="3" y="0" width="3" height="9" fill="#0a8a0a"/><rect x="0" y="3" width="9" height="3" fill="#0a8a0a"/><rect x="4" y="1" width="1" height="7" fill="#70e050"/><rect x="1" y="4" width="7" height="1" fill="#70e050"/></svg>
<div class="t" style="left:611px;top:524px;font-size:11px;line-height:13px;">2015-06-20 12:26:28</div>
<div class="t" style="left:481px;width:400px;text-align:right;top:524px;font-size:11px;line-height:13px;">Przyjęcie zewnętrzne</div>
<div class="t" style="left:555px;width:400px;text-align:right;top:524px;font-size:11px;line-height:13px;">7542-20/2015</div>
<div class="t" style="left:615px;width:400px;text-align:right;top:524px;font-size:11px;line-height:13px;">0,300</div>
<div class="t" style="left:725px;width:400px;text-align:right;top:524px;font-size:11px;line-height:13px;">0,000</div>
<div class="t" style="left:836px;width:400px;text-align:right;top:524px;font-size:11px;line-height:13px;">0,020</div>
<div class="t" style="left:935px;width:400px;text-align:right;top:524px;font-size:11px;line-height:13px;">0,020</div>
<div class="t" style="left:1590px;top:524px;font-size:11px;line-height:13px;">Waga 1</div>
<div style="left:1363px;top:179px;width:216px;height:360px;background:#fff;"></div>
<div style="left:1396px;top:183px;width:162px;height:9px;background:linear-gradient(to bottom,#ececec 0,#6a6a6a 25%,#b4b4b4 50%,#5a5a5a 75%,#e4e4e4 100%);filter:blur(0.7px);opacity:0.8;border-radius:4px;-webkit-mask-image:linear-gradient(to right,transparent 0,#000 5%,#000 85%,transparent 100%);"></div>
<div style="left:1558px;top:183px;width:21px;height:9px;background:#fafafa;"></div>
<div style="left:1396px;top:201px;width:162px;height:9px;background:linear-gradient(to bottom,#ececec 0,#6a6a6a 25%,#b4b4b4 50%,#5a5a5a 75%,#e4e4e4 100%);filter:blur(0.7px);opacity:0.8;border-radius:4px;-webkit-mask-image:linear-gradient(to right,transparent 0,#000 5%,#000 85%,transparent 100%);"></div>
<div style="left:1558px;top:201px;width:21px;height:9px;background:#fafafa;"></div>
<div style="left:1396px;top:219px;width:162px;height:9px;background:linear-gradient(to bottom,#ececec 0,#6a6a6a 25%,#b4b4b4 50%,#5a5a5a 75%,#e4e4e4 100%);filter:blur(0.7px);opacity:0.8;border-radius:4px;-webkit-mask-image:linear-gradient(to right,transparent 0,#000 5%,#000 85%,transparent 100%);"></div>
<div style="left:1558px;top:219px;width:21px;height:9px;background:#fafafa;"></div>
<div style="left:1395px;top:237px;width:163px;height:9px;background:linear-gradient(to bottom,#ececec 0,#6a6a6a 25%,#b4b4b4 50%,#5a5a5a 75%,#e4e4e4 100%);filter:blur(0.7px);opacity:0.8;border-radius:4px;-webkit-mask-image:linear-gradient(to right,transparent 0,#000 5%,#000 85%,transparent 100%);"></div>
<div style="left:1558px;top:237px;width:21px;height:9px;background:#fafafa;"></div>
<div style="left:1385px;top:255px;width:173px;height:9px;background:linear-gradient(to bottom,#ececec 0,#6a6a6a 25%,#b4b4b4 50%,#5a5a5a 75%,#e4e4e4 100%);filter:blur(0.7px);opacity:0.8;border-radius:4px;-webkit-mask-image:linear-gradient(to right,transparent 0,#000 5%,#000 85%,transparent 100%);"></div>
<div style="left:1558px;top:255px;width:21px;height:9px;background:#fafafa;"></div>
<div style="left:1385px;top:273px;width:173px;height:9px;background:linear-gradient(to bottom,#ececec 0,#6a6a6a 25%,#b4b4b4 50%,#5a5a5a 75%,#e4e4e4 100%);filter:blur(0.7px);opacity:0.8;border-radius:4px;-webkit-mask-image:linear-gradient(to right,transparent 0,#000 5%,#000 85%,transparent 100%);"></div>
<div style="left:1558px;top:273px;width:21px;height:9px;background:#fafafa;"></div>
<div style="left:1394px;top:291px;width:164px;height:9px;background:linear-gradient(to bottom,#ececec 0,#6a6a6a 25%,#b4b4b4 50%,#5a5a5a 75%,#e4e4e4 100%);filter:blur(0.7px);opacity:0.8;border-radius:4px;-webkit-mask-image:linear-gradient(to right,transparent 0,#000 5%,#000 85%,transparent 100%);"></div>
<div style="left:1558px;top:291px;width:21px;height:9px;background:#fafafa;"></div>
<div style="left:1397px;top:309px;width:161px;height:9px;background:linear-gradient(to bottom,#ececec 0,#6a6a6a 25%,#b4b4b4 50%,#5a5a5a 75%,#e4e4e4 100%);filter:blur(0.7px);opacity:0.8;border-radius:4px;-webkit-mask-image:linear-gradient(to right,transparent 0,#000 5%,#000 85%,transparent 100%);"></div>
<div style="left:1558px;top:309px;width:21px;height:9px;background:#fafafa;"></div>
<div style="left:1394px;top:327px;width:164px;height:9px;background:linear-gradient(to bottom,#ececec 0,#6a6a6a 25%,#b4b4b4 50%,#5a5a5a 75%,#e4e4e4 100%);filter:blur(0.7px);opacity:0.8;border-radius:4px;-webkit-mask-image:linear-gradient(to right,transparent 0,#000 5%,#000 85%,transparent 100%);"></div>
<div style="left:1558px;top:327px;width:21px;height:9px;background:#fafafa;"></div>
<div style="left:1394px;top:345px;width:167px;height:9px;background:linear-gradient(to bottom,#ececec 0,#6a6a6a 25%,#b4b4b4 50%,#5a5a5a 75%,#e4e4e4 100%);filter:blur(0.7px);opacity:0.8;border-radius:4px;-webkit-mask-image:linear-gradient(to right,transparent 0,#000 5%,#000 85%,transparent 100%);"></div>
<div style="left:1561px;top:345px;width:18px;height:9px;background:#fafafa;"></div>
<div style="left:1397px;top:363px;width:161px;height:9px;background:linear-gradient(to bottom,#ececec 0,#6a6a6a 25%,#b4b4b4 50%,#5a5a5a 75%,#e4e4e4 100%);filter:blur(0.7px);opacity:0.8;border-radius:4px;-webkit-mask-image:linear-gradient(to right,transparent 0,#000 5%,#000 85%,transparent 100%);"></div>
<div style="left:1558px;top:363px;width:21px;height:9px;background:#fafafa;"></div>
<div style="left:1379px;top:381px;width:179px;height:9px;background:linear-gradient(to bottom,#ececec 0,#6a6a6a 25%,#b4b4b4 50%,#5a5a5a 75%,#e4e4e4 100%);filter:blur(0.7px);opacity:0.8;border-radius:4px;-webkit-mask-image:linear-gradient(to right,transparent 0,#000 5%,#000 85%,transparent 100%);"></div>
<div style="left:1558px;top:381px;width:21px;height:9px;background:#fafafa;"></div>
<div style="left:1379px;top:399px;width:179px;height:9px;background:linear-gradient(to bottom,#ececec 0,#6a6a6a 25%,#b4b4b4 50%,#5a5a5a 75%,#e4e4e4 100%);filter:blur(0.7px);opacity:0.8;border-radius:4px;-webkit-mask-image:linear-gradient(to right,transparent 0,#000 5%,#000 85%,transparent 100%);"></div>
<div style="left:1558px;top:399px;width:21px;height:9px;background:#fafafa;"></div>
<div style="left:1379px;top:417px;width:179px;height:9px;background:linear-gradient(to bottom,#ececec 0,#6a6a6a 25%,#b4b4b4 50%,#5a5a5a 75%,#e4e4e4 100%);filter:blur(0.7px);opacity:0.8;border-radius:4px;-webkit-mask-image:linear-gradient(to right,transparent 0,#000 5%,#000 85%,transparent 100%);"></div>
<div style="left:1558px;top:417px;width:21px;height:9px;background:#fafafa;"></div>
<div style="left:1394px;top:435px;width:168px;height:9px;background:linear-gradient(to bottom,#ececec 0,#6a6a6a 25%,#b4b4b4 50%,#5a5a5a 75%,#e4e4e4 100%);filter:blur(0.7px);opacity:0.8;border-radius:4px;-webkit-mask-image:linear-gradient(to right,transparent 0,#000 5%,#000 85%,transparent 100%);"></div>
<div style="left:1562px;top:435px;width:17px;height:9px;background:#fafafa;"></div>
<div style="left:1385px;top:453px;width:147px;height:9px;background:linear-gradient(to bottom,#ececec 0,#6a6a6a 25%,#b4b4b4 50%,#5a5a5a 75%,#e4e4e4 100%);filter:blur(0.7px);opacity:0.8;border-radius:4px;-webkit-mask-image:linear-gradient(to right,transparent 0,#000 5%,#000 85%,transparent 100%);"></div>
<div style="left:1532px;top:453px;width:47px;height:9px;background:#fafafa;"></div>
<div style="left:1394px;top:471px;width:164px;height:9px;background:linear-gradient(to bottom,#ececec 0,#6a6a6a 25%,#b4b4b4 50%,#5a5a5a 75%,#e4e4e4 100%);filter:blur(0.7px);opacity:0.8;border-radius:4px;-webkit-mask-image:linear-gradient(to right,transparent 0,#000 5%,#000 85%,transparent 100%);"></div>
<div style="left:1558px;top:471px;width:21px;height:9px;background:#fafafa;"></div>
<div style="left:1394px;top:489px;width:164px;height:9px;background:linear-gradient(to bottom,#ececec 0,#6a6a6a 25%,#b4b4b4 50%,#5a5a5a 75%,#e4e4e4 100%);filter:blur(0.7px);opacity:0.8;border-radius:4px;-webkit-mask-image:linear-gradient(to right,transparent 0,#000 5%,#000 85%,transparent 100%);"></div>
<div style="left:1558px;top:489px;width:21px;height:9px;background:#fafafa;"></div>
<div style="left:1394px;top:507px;width:164px;height:9px;background:linear-gradient(to bottom,#ececec 0,#6a6a6a 25%,#b4b4b4 50%,#5a5a5a 75%,#e4e4e4 100%);filter:blur(0.7px);opacity:0.8;border-radius:4px;-webkit-mask-image:linear-gradient(to right,transparent 0,#000 5%,#000 85%,transparent 100%);"></div>
<div style="left:1558px;top:507px;width:21px;height:9px;background:#fafafa;"></div>
<div style="left:1373px;top:525px;width:189px;height:9px;background:linear-gradient(to bottom,#ececec 0,#6a6a6a 25%,#b4b4b4 50%,#5a5a5a 75%,#e4e4e4 100%);filter:blur(0.7px);opacity:0.8;border-radius:4px;-webkit-mask-image:linear-gradient(to right,transparent 0,#000 5%,#000 85%,transparent 100%);"></div>
<div style="left:1562px;top:525px;width:17px;height:9px;background:#fafafa;"></div>
<div style="left:567px;top:957px;width:1092px;height:16px;background:#f0f0f0;"></div>
<div style="left:584px;top:957px;width:822px;height:15px;background:#cdcdcd;"></div>
<svg style="left:571px;top:961px;" width="8" height="8" viewBox="0 0 8 8"><path d="M6 0.5 L2 4 L6 7.5" stroke="#505050" stroke-width="1.8" fill="none"/></svg>
<svg style="left:1647px;top:961px;" width="8" height="8" viewBox="0 0 8 8"><path d="M2 0.5 L6 4 L2 7.5" stroke="#505050" stroke-width="1.8" fill="none"/></svg>
<div style="left:487px;top:233px;width:694px;height:514px;border:1px solid #4d86c6;background:#6aaaf4;"></div>
<div class="t" style="left:533px;width:600px;text-align:center;top:241px;font-size:14.2px;line-height:16px;color:#2a2a2a;">Procesy magazynowe</div>
<div style="left:1143px;top:234px;width:31px;height:20px;background:#c75050;"></div>
<svg style="left:1154px;top:240px;" width="9" height="9" viewBox="0 0 9 9"><path d="M1 1 L8 8 M8 1 L1 8" stroke="#fff" stroke-width="1.7"/></svg>
<div style="left:494px;top:263px;width:680px;height:477px;border:1px solid #4d86c6;background:#f0f0f0;"></div>
<div style="left:495px;top:264px;width:678px;height:52px;background:#fff;"></div>
<div style="left:495px;top:316px;width:678px;height:1px;background:#a0a0a0;"></div>
<div style="left:495px;top:317px;width:678px;height:1px;background:#fff;"></div>
<svg style="left:511px;top:271px;" width="32" height="33" viewBox="0 0 32 33"><defs><linearGradient id="tgg" x1="0" y1="0" x2="1" y2="1"><stop offset="0" stop-color="#70e050"/><stop offset="1" stop-color="#189018"/></linearGradient>
<linearGradient id="trg" x1="0" y1="0" x2="0" y2="1"><stop offset="0" stop-color="#ff5040"/><stop offset="1" stop-color="#c00000"/></linearGradient>
<linearGradient id="twg" x1="0" y1="0" x2="0" y2="1"><stop offset="0" stop-color="#c0f0ff"/><stop offset="1" stop-color="#2a80f0"/></linearGradient></defs>
<path d="M1.5 5.5 L12 2 L25 2 L25 18.5 L1.5 18.5 Z" fill="url(#tgg)" stroke="#0a5a0a"/>
<path d="M3 7 L11 3.5 L11 6 L3 15 Z" fill="#b0f890" opacity="0.6"/>
<rect x="2" y="18.5" width="11" height="4.5" fill="#1a1a1a"/>
<rect x="3.5" y="19.5" width="2" height="3" fill="#999"/><rect x="8.5" y="19.5" width="2" height="3" fill="#777"/>
<path d="M13 6 L14.5 4 L26 4 L28.5 8 L30.5 14 V24 L13 24 Z" fill="url(#trg)" stroke="#600000"/>
<rect x="14.5" y="4.5" width="11" height="2" fill="#ff8070"/>
<rect x="17" y="8.5" width="12.5" height="6" rx="1.5" fill="url(#twg)" stroke="#600000" stroke-width="0.6"/>
<rect x="14.5" y="10" width="2.5" height="7.5" fill="#8ac8ff"/>
<path d="M20 17 Q25 19.5 29 17 L28 19 Q25 20.5 21 19 Z" fill="#dde4ea"/>
<rect x="17.5" y="20.5" width="4" height="2" fill="#ffd040"/><rect x="26.5" y="20.5" width="3" height="2" fill="#ffd040"/>
<rect x="13" y="21" width="4.5" height="6" rx="1.5" fill="#222"/><rect x="25.5" y="23.5" width="5" height="3" rx="1" fill="#111"/>
<rect x="25" y="0.5" width="1.5" height="3.5" fill="#555"/>
<ellipse cx="7.5" cy="28" rx="5.3" ry="3.6" fill="#f2c420" stroke="#b07a00" stroke-width="0.8"/></svg>
<div class="t" style="left:577px;top:283px;font-size:11.8px;line-height:14px;font-weight:bold;letter-spacing:-0.1px;">Procesy magazynowe</div>
<div style="left:501px;top:326px;width:667px;height:149px;border:1px solid #646464;background:#fff;"></div>
<div style="left:502px;top:327px;width:665px;height:23px;background:#fbfcfd;"></div>
<div style="left:502px;top:350px;width:665px;height:1px;background:#e3ebf6;"></div>
<div style="left:541px;top:327px;width:1px;height:23px;background:#e3ebf6;"></div>
<div style="left:542px;top:351px;width:1px;height:123px;background:#ececec;"></div>
<div style="left:841px;top:327px;width:1px;height:23px;background:#e3ebf6;"></div>
<div style="left:842px;top:351px;width:1px;height:123px;background:#ececec;"></div>
<div style="left:921px;top:327px;width:1px;height:23px;background:#e3ebf6;"></div>
<div style="left:922px;top:351px;width:1px;height:123px;background:#ececec;"></div>
<div style="left:1021px;top:327px;width:1px;height:23px;background:#e3ebf6;"></div>
<div style="left:1022px;top:351px;width:1px;height:123px;background:#ececec;"></div>
<div style="left:1111px;top:327px;width:1px;height:23px;background:#e3ebf6;"></div>
<div style="left:1112px;top:351px;width:1px;height:123px;background:#ececec;"></div>
<div style="left:502px;top:367px;width:665px;height:1px;background:#ececec;"></div>
<div style="left:502px;top:384px;width:665px;height:1px;background:#ececec;"></div>
<div style="left:502px;top:401px;width:665px;height:1px;background:#ececec;"></div>
<div style="left:502px;top:418px;width:665px;height:1px;background:#ececec;"></div>
<div style="left:502px;top:435px;width:665px;height:1px;background:#ececec;"></div>
<div style="left:502px;top:452px;width:665px;height:1px;background:#ececec;"></div>
<div style="left:502px;top:469px;width:665px;height:1px;background:#ececec;"></div>
<div class="t" style="left:508px;top:333px;font-size:11px;line-height:13px;">Lp.</div>
<div class="t" style="left:547px;top:333px;font-size:11px;line-height:13px;">Nazwa</div>
<div class="t" style="left:515px;width:400px;text-align:right;top:333px;font-size:11px;line-height:13px;">Stan</div>
<div class="t" style="left:615px;width:400px;text-align:right;top:333px;font-size:11px;line-height:13px;">Masa dla procesu</div>
<div class="t" style="left:705px;width:400px;text-align:right;top:333px;font-size:11px;line-height:13px;">Ubytek masy</div>
<div class="t" style="left:508px;top:354px;font-size:11px;line-height:13px;">1</div>
<div class="t" style="left:548px;top:354px;font-size:11px;line-height:13px;">17 09 04  Zmieszane odpady z budowy, remontów i dem...</div>
<div class="t" style="left:513px;width:400px;text-align:right;top:354px;font-size:11px;line-height:13px;">4,170</div>
<div class="t" style="left:613px;width:400px;text-align:right;top:354px;font-size:11px;line-height:13px;">4,170</div>
<div style="left:509px;top:480px;width:13px;height:13px;background:#fff;border:1px solid #333;"></div>
<svg style="left:511px;top:482px;" width="10" height="10" viewBox="0 0 10 10"><path d="M1 5 L3.8 8 L9 1.5" stroke="#000" stroke-width="2.4" fill="none"/></svg>
<div class="t" style="left:525px;top:481px;font-size:11px;line-height:13px;font-weight:bold;">W</div>
<div style="left:583px;top:480px;width:13px;height:13px;background:#e6e6e6;border:1px solid #bcbcbc;"></div>
<div class="t" style="left:599px;top:481px;font-size:11px;line-height:13px;font-weight:bold;color:#8d8d8d;">Zb</div>
<div style="left:655px;top:480px;width:13px;height:13px;background:#e6e6e6;border:1px solid #bcbcbc;"></div>
<div class="t" style="left:671px;top:481px;font-size:11px;line-height:13px;font-weight:bold;color:#8d8d8d;">Od</div>
<div style="left:726px;top:480px;width:13px;height:13px;background:#e6e6e6;border:1px solid #bcbcbc;"></div>
<div class="t" style="left:742px;top:481px;font-size:11px;line-height:13px;font-weight:bold;color:#8d8d8d;">Un</div>
<div style="left:803px;top:480px;width:13px;height:13px;background:#e6e6e6;border:1px solid #bcbcbc;"></div>
<div class="t" style="left:819px;top:481px;font-size:11px;line-height:13px;font-weight:bold;color:#8d8d8d;">Ok</div>
<div class="t" style="left:930px;top:481px;font-size:11px;line-height:13px;font-weight:bold;letter-spacing:0.25px;">SUMA:  4,170 Mg</div>
<svg style="left:1125px;top:484px;" width="16" height="14" viewBox="0 0 16 14"><defs><linearGradient id="tg" x1="0" y1="0" x2="0" y2="1"><stop offset="0" stop-color="#5ad05a"/><stop offset="1" stop-color="#0a8a0a"/></linearGradient></defs><path d="M8 0.5 L15.5 13.5 H0.5 Z" fill="url(#tg)" stroke="#0a6a0a" stroke-width="0.7"/></svg>
<div style="left:501px;top:530px;width:664px;height:156px;border:1px solid #adadad;background:#fff;"></div>
<div style="left:505px;top:534px;width:658px;height:149px;background:#f0f0f0;"></div>
<div style="left:599px;top:511px;width:130px;height:20px;border:1px solid #adadad;background:linear-gradient(#f0f0f0,#e8e8e8);"></div>
<div style="left:501px;top:509px;width:99px;height:22px;border:1px solid #adadad;border-bottom:none;background:#fff;"></div>
<div class="t" style="left:508px;top:514px;font-size:11px;line-height:13px;">Dane dla procesu</div>
<svg style="left:603px;top:512px;" width="18" height="18" viewBox="0 0 18 18"><defs><linearGradient id="ig" x1="0" y1="0" x2="1" y2="1"><stop offset="0" stop-color="#c8ecff"/><stop offset="0.5" stop-color="#2a70e0"/><stop offset="1" stop-color="#1a4ac0"/></linearGradient></defs>
<path d="M7 1 H10.5 L16.8 7.2 V10.7 L10.5 17 H7 L0.8 10.7 V7.2 Z" fill="#fff" stroke="#2a60d0" stroke-width="1.1"/>
<path d="M8.75 3 L14.6 8.95 L8.75 14.9 L2.9 8.95 Z" fill="url(#ig)"/>
<rect x="7.8" y="7.5" width="2" height="5.5" fill="#fff"/><rect x="7.8" y="5" width="2" height="1.6" fill="#fff"/></svg>
<div class="t" style="left:626px;top:516px;font-size:11px;line-height:13px;">Informacja o limitach</div>
<div class="t" style="left:509px;top:548px;font-size:11px;line-height:13px;font-weight:bold;">DATA OPERACJI</div>
<div class="t" style="left:509px;top:576px;font-size:11px;line-height:13px;font-weight:bold;letter-spacing:-0.3px;">MAGAZYN DOCELOWY</div>
<div class="t" style="left:509px;top:602px;font-size:11px;line-height:13px;font-weight:bold;letter-spacing:-0.35px;">PRODUKT</div>
<div class="t" style="left:509px;top:630px;font-size:11px;line-height:13px;font-weight:bold;letter-spacing:-0.35px;">PROCES</div>
<div class="t" style="left:509px;top:656px;font-size:11px;line-height:13px;font-weight:bold;">NOTATKA</div>
<div style="left:654px;top:543px;width:156px;height:21px;background:#fff;border:1px solid #abadb3;"></div>
<div class="t" style="left:662px;top:548px;font-size:11px;line-height:13px;">3</div>
<div class="t" style="left:681px;top:548px;font-size:11px;line-height:13px;">grudnia</div>
<div class="t" style="left:733px;top:548px;font-size:11px;line-height:13px;">2015</div>
<svg style="left:783px;top:547px;" width="22" height="13" viewBox="0 0 22 13"><rect x="1.5" y="2" width="10" height="10.5" fill="#e0e0e0" opacity="0.5"/>
<path d="M0.5 0.5 H10.5 V9 L8.5 11.5 H0.5 Z" fill="#f4f8ff" stroke="#6e6060"/>
<rect x="2" y="3" width="6.5" height="6.5" fill="#b4b8c0"/>
<rect x="3" y="4" width="1" height="1" fill="#fff"/><rect x="3" y="6" width="1" height="1" fill="#fff"/><rect x="3" y="8" width="1" height="1" fill="#fff"/><rect x="5" y="4" width="1" height="1" fill="#fff"/><rect x="5" y="6" width="1" height="1" fill="#fff"/><rect x="5" y="8" width="1" height="1" fill="#fff"/><rect x="7" y="4" width="1" height="1" fill="#fff"/><rect x="7" y="6" width="1" height="1" fill="#fff"/><rect x="7" y="8" width="1" height="1" fill="#fff"/>
<path d="M13 4 H20 L16.5 7.5 Z" fill="#2a4a80"/></svg>
<div style="left:830px;top:543px;width:88px;height:21px;background:#fff;border:1px solid #abadb3;"></div>
<div class="t" style="left:832px;top:548px;font-size:11px;line-height:13px;">08:50:24</div>
<svg style="left:900px;top:546px;" width="16" height="16" viewBox="0 0 16 16"><path d="M0.5 0 V6.5 H14.5 V0" fill="#f0f0f0" stroke="#a8a8a8"/>
<rect x="0.5" y="8.5" width="14" height="6" fill="#f0f0f0" stroke="#a8a8a8"/>
<path d="M5 5 H10 L7.5 2.2 Z" fill="#000" stroke="#000" stroke-width="0.5"/><path d="M5 10 H10 L7.5 12.8 Z" fill="#000" stroke="#000" stroke-width="0.5"/></svg>
<div style="left:654px;top:571px;width:440px;height:21px;border:1px solid #7a7a7a;background:linear-gradient(#f2f2f2,#e4e4e4);"></div>
<div style="left:1075px;top:573px;width:17px;height:17px;border:1px solid #c8c8c8;background:linear-gradient(#f4f4f4,#e8e8e8);"></div>
<svg style="left:1079px;top:579px;" width="9" height="5" viewBox="0 0 9 5"><path d="M0 0 H9 L4.5 4.5 Z" fill="#111"/></svg>
<div class="t" style="left:657px;top:576px;font-size:11px;line-height:13px;">Mag. R13 przed procesem R3 i R5 (na kw.3 i 4)</div>
<div style="left:654px;top:599px;width:440px;height:19px;border:1px solid #7a7a7a;background:#fff;"></div>
<div style="left:655px;top:600px;width:438px;height:17px;overflow:hidden;"><div class="t" style="left:2px;top:2px;font-size:11px;line-height:13px;font-weight:bold;color:#0000f0;letter-spacing:0.4px;">17 09 04  Zmieszane odpady z budowy, remontów i demontażu inne niż wymienione</div></div>
<div style="left:654px;top:625px;width:440px;height:21px;border:1px solid #7a7a7a;background:linear-gradient(#f2f2f2,#e4e4e4);"></div>
<div style="left:1075px;top:627px;width:17px;height:17px;border:1px solid #c8c8c8;background:linear-gradient(#f4f4f4,#e8e8e8);"></div>
<svg style="left:1079px;top:633px;" width="9" height="5" viewBox="0 0 9 5"><path d="M0 0 H9 L4.5 4.5 Z" fill="#111"/></svg>
<div class="t" style="left:657px;top:630px;font-size:11px;line-height:13px;">- - -</div>
<div style="left:654px;top:653px;width:440px;height:19px;border:1px solid #7a7a7a;background:#fff;"></div>
<svg style="left:1126px;top:573px;" width="15" height="17" viewBox="0 0 15 17"><path d="M8 4.5 H11.3 Q13 5 13 7.5 V10.2" stroke="#0a5a0a" stroke-width="2.8" fill="none"/>
<path d="M8 4.5 H11.3 Q12.9 5 12.9 7.5 V9.6" stroke="#3cc02c" stroke-width="1.1" fill="none"/>
<path d="M4.6 4.4 L8.7 0.8 L8.7 8 Z" fill="#50d040" stroke="#0a5a0a" stroke-width="0.9"/>
<path d="M2.2 6.8 V10 Q2.5 12.5 7 12.5" stroke="#0a5a0a" stroke-width="2.8" fill="none"/>
<path d="M2.2 7.4 V10 Q2.5 12.4 7 12.4" stroke="#3cc02c" stroke-width="1.1" fill="none"/>
<path d="M10.3 12.5 L6.2 8.9 L6.2 16 Z" fill="#50d040" stroke="#0a5a0a" stroke-width="0.9"/></svg>
<svg style="left:1126px;top:628px;" width="15" height="17" viewBox="0 0 15 17"><path d="M8 4.5 H11.3 Q13 5 13 7.5 V10.2" stroke="#0a5a0a" stroke-width="2.8" fill="none"/>
<path d="M8 4.5 H11.3 Q12.9 5 12.9 7.5 V9.6" stroke="#3cc02c" stroke-width="1.1" fill="none"/>
<path d="M4.6 4.4 L8.7 0.8 L8.7 8 Z" fill="#50d040" stroke="#0a5a0a" stroke-width="0.9"/>
<path d="M2.2 6.8 V10 Q2.5 12.5 7 12.5" stroke="#0a5a0a" stroke-width="2.8" fill="none"/>
<path d="M2.2 7.4 V10 Q2.5 12.4 7 12.4" stroke="#3cc02c" stroke-width="1.1" fill="none"/>
<path d="M10.3 12.5 L6.2 8.9 L6.2 16 Z" fill="#50d040" stroke="#0a5a0a" stroke-width="0.9"/></svg>
<div style="left:1107px;top:597px;width:52px;height:22px;border:1px solid #acacac;background:linear-gradient(#f0f0f0,#e5e5e5);"></div>
<div class="t" style="left:833px;width:600px;text-align:center;top:603px;font-size:11px;line-height:13px;">Zmień</div>
<div style="left:495px;top:692px;width:678px;height:1px;background:#a0a0a0;"></div>
<div style="left:495px;top:693px;width:678px;height:1px;background:#fff;"></div>
<div style="left:1005px;top:705px;width:73px;height:23px;border:1px solid #acacac;background:linear-gradient(#f0f0f0,#e5e5e5);"></div>
<div class="t" style="left:741px;width:600px;text-align:center;top:711px;font-size:11px;line-height:13px;">Ok</div>
<div style="left:1086px;top:705px;width:73px;height:23px;border:1px solid #acacac;background:linear-gradient(#f0f0f0,#e5e5e5);"></div>
<div class="t" style="left:822px;width:600px;text-align:center;top:711px;font-size:11px;line-height:13px;">Anuluj</div>
</body></html>
